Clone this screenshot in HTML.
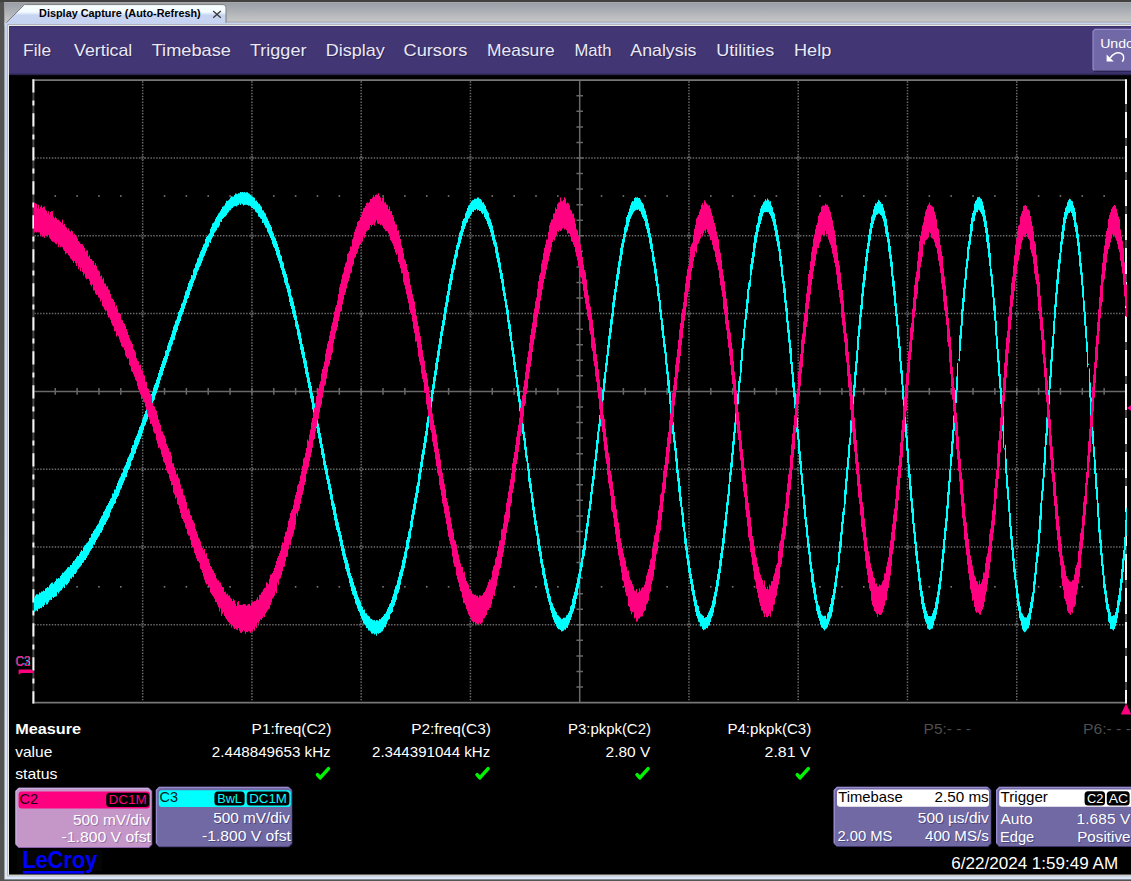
<!DOCTYPE html>
<html lang="en"><head><meta charset="utf-8"><title>Display Capture (Auto-Refresh)</title>
<style>
html,body{margin:0;padding:0;background:#525252;overflow:hidden}
svg{display:block;font-family:"Liberation Sans", Arial, Helvetica, sans-serif}
text{white-space:pre}
</style></head><body>
<svg width="1131" height="881" viewBox="0 0 1131 881">
<defs>
<linearGradient id="strip" x1="0" y1="0" x2="0" y2="1"><stop offset="0" stop-color="#979da6"/><stop offset="1" stop-color="#c9c9c9"/></linearGradient>
<linearGradient id="tab" x1="0" y1="0" x2="0" y2="1"><stop offset="0" stop-color="#f8ffff"/><stop offset="0.38" stop-color="#f2fbff"/><stop offset="0.55" stop-color="#c6d3f1"/><stop offset="1" stop-color="#c6d3f1"/></linearGradient>
<linearGradient id="frame" x1="0" y1="0" x2="0" y2="1"><stop offset="0" stop-color="#c6d3f1"/><stop offset="1" stop-color="#dce6fa"/></linearGradient>
<linearGradient id="tabcorner" x1="0" y1="0" x2="0" y2="1"><stop offset="0" stop-color="#9aa0a8"/><stop offset="1" stop-color="#c4c4c4"/></linearGradient>
</defs>

<rect x="0" y="0" width="1131" height="881" fill="#4f4f4f"/>
<rect x="0" y="0" width="1131" height="2" fill="#414141"/>
<rect x="4" y="2" width="1127" height="21" fill="url(#strip)"/>
<rect x="4" y="2" width="1127" height="1" fill="#a9a9a9"/>
<rect x="4" y="2" width="1" height="21" fill="#a0a0a0"/>
<rect x="226" y="21.6" width="905" height="1" fill="#9c9c9c"/>
<rect x="4.5" y="22.6" width="1131" height="857" fill="url(#frame)"/>
<rect x="4" y="22.6" width="0.8" height="857" fill="#a4a4a4"/>
<path d="M5,24 L24.5,4.6 L223,4.6 Q226,4.6 226,7.6 L226,24 Z" fill="url(#tab)" stroke="#7d7d7d" stroke-width="1"/>
<rect x="5" y="22.8" width="222" height="2" fill="#c6d3f1"/>
<rect x="4.6" y="22.8" width="3" height="3" fill="#c6d3f1"/>
<text x="39.1" y="16.9" font-size="10.6" fill="#000" font-weight="bold" textLength="161.6" lengthAdjust="spacingAndGlyphs">Display Capture (Auto-Refresh)</text>
<path d="M213.2,11 L220.8,17.8 M220.8,11 L213.2,17.8" stroke="#3c3c3c" stroke-width="1.4" fill="none"/>
<rect x="7.3" y="24.3" width="1131" height="852" fill="#a9a9a9"/>
<rect x="8.1" y="25.1" width="1131" height="850.4" fill="#f1f1ef"/>
<rect x="0" y="879.6" width="1131" height="2" fill="#555"/>
<rect x="0" y="0" width="4" height="881" fill="#525252"/>
<rect x="0" y="0" width="1131" height="2" fill="#414141"/>
<rect x="9" y="26" width="1131" height="848.6" fill="#000"/>
<rect x="9" y="26" width="1131" height="49" fill="#423774"/>
<rect x="9" y="73.6" width="1131" height="1.6" fill="#2c2452"/>
<rect x="9" y="26" width="1131" height="1" fill="#3a2f6a"/>
<text x="24.1" y="57.4" font-size="16.6" fill="#2d2557" font-weight="normal" textLength="28.0" lengthAdjust="spacingAndGlyphs">File</text>
<text x="23.1" y="56.4" font-size="16.6" fill="#ebe9f5" font-weight="normal" textLength="28.0" lengthAdjust="spacingAndGlyphs">File</text>
<text x="75.1" y="57.4" font-size="16.6" fill="#2d2557" font-weight="normal" textLength="58.2" lengthAdjust="spacingAndGlyphs">Vertical</text>
<text x="74.1" y="56.4" font-size="16.6" fill="#ebe9f5" font-weight="normal" textLength="58.2" lengthAdjust="spacingAndGlyphs">Vertical</text>
<text x="152.7" y="57.4" font-size="16.6" fill="#2d2557" font-weight="normal" textLength="79.2" lengthAdjust="spacingAndGlyphs">Timebase</text>
<text x="151.7" y="56.4" font-size="16.6" fill="#ebe9f5" font-weight="normal" textLength="79.2" lengthAdjust="spacingAndGlyphs">Timebase</text>
<text x="250.9" y="57.4" font-size="16.6" fill="#2d2557" font-weight="normal" textLength="56.6" lengthAdjust="spacingAndGlyphs">Trigger</text>
<text x="249.9" y="56.4" font-size="16.6" fill="#ebe9f5" font-weight="normal" textLength="56.6" lengthAdjust="spacingAndGlyphs">Trigger</text>
<text x="326.8" y="57.4" font-size="16.6" fill="#2d2557" font-weight="normal" textLength="58.9" lengthAdjust="spacingAndGlyphs">Display</text>
<text x="325.8" y="56.4" font-size="16.6" fill="#ebe9f5" font-weight="normal" textLength="58.9" lengthAdjust="spacingAndGlyphs">Display</text>
<text x="404.5" y="57.4" font-size="16.6" fill="#2d2557" font-weight="normal" textLength="63.8" lengthAdjust="spacingAndGlyphs">Cursors</text>
<text x="403.5" y="56.4" font-size="16.6" fill="#ebe9f5" font-weight="normal" textLength="63.8" lengthAdjust="spacingAndGlyphs">Cursors</text>
<text x="488.1" y="57.4" font-size="16.6" fill="#2d2557" font-weight="normal" textLength="67.6" lengthAdjust="spacingAndGlyphs">Measure</text>
<text x="487.1" y="56.4" font-size="16.6" fill="#ebe9f5" font-weight="normal" textLength="67.6" lengthAdjust="spacingAndGlyphs">Measure</text>
<text x="575.5" y="57.4" font-size="16.6" fill="#2d2557" font-weight="normal" textLength="37.0" lengthAdjust="spacingAndGlyphs">Math</text>
<text x="574.5" y="56.4" font-size="16.6" fill="#ebe9f5" font-weight="normal" textLength="37.0" lengthAdjust="spacingAndGlyphs">Math</text>
<text x="631.3" y="57.4" font-size="16.6" fill="#2d2557" font-weight="normal" textLength="66.2" lengthAdjust="spacingAndGlyphs">Analysis</text>
<text x="630.3" y="56.4" font-size="16.6" fill="#ebe9f5" font-weight="normal" textLength="66.2" lengthAdjust="spacingAndGlyphs">Analysis</text>
<text x="717.3" y="57.4" font-size="16.6" fill="#2d2557" font-weight="normal" textLength="57.9" lengthAdjust="spacingAndGlyphs">Utilities</text>
<text x="716.3" y="56.4" font-size="16.6" fill="#ebe9f5" font-weight="normal" textLength="57.9" lengthAdjust="spacingAndGlyphs">Utilities</text>
<text x="795.0" y="57.4" font-size="16.6" fill="#2d2557" font-weight="normal" textLength="37.3" lengthAdjust="spacingAndGlyphs">Help</text>
<text x="794.0" y="56.4" font-size="16.6" fill="#ebe9f5" font-weight="normal" textLength="37.3" lengthAdjust="spacingAndGlyphs">Help</text>
<path d="M1095,29.4 L1140,29.4 L1140,71 L1095,71 L1093,69 L1093,31.4 Z" fill="#7068a7" stroke="#958cca" stroke-width="1.2"/>
<path d="M1094,71.4 L1140,71.4" stroke="#2b2355" stroke-width="1.6"/>
<text x="1100.2" y="48.4" font-size="13.4" fill="#fff" font-weight="normal" textLength="33.7" lengthAdjust="spacingAndGlyphs">Undo</text>
<path d="M1106.6,54.6 L1106.6,61.6 L1113.8,61.6 Z" fill="#fff"/>
<path d="M1110.2,58 Q1114,52.6 1118.6,52.8 Q1124.6,53.6 1123.6,59 L1122.4,61.8" stroke="#fff" stroke-width="1.5" fill="none"/>
<path d="M142.66,81.20V701.60M251.92,81.20V701.60M361.18,81.20V701.60M470.44,81.20V701.60M688.96,81.20V701.60M798.22,81.20V701.60M907.48,81.20V701.60M1016.74,81.20V701.60M34.40,158.00H1125.00M34.40,235.80H1125.00M34.40,313.60H1125.00M34.40,469.20H1125.00M34.40,547.00H1125.00M34.40,624.80H1125.00" stroke="#6a6a6a" stroke-width="1.5" stroke-dasharray="1.45 1.45" fill="none"/>
<path d="M140.46,158.00L142.66,155.80L144.86,158.00L142.66,160.20ZM140.46,235.80L142.66,233.60L144.86,235.80L142.66,238.00ZM140.46,313.60L142.66,311.40L144.86,313.60L142.66,315.80ZM140.46,469.20L142.66,467.00L144.86,469.20L142.66,471.40ZM140.46,547.00L142.66,544.80L144.86,547.00L142.66,549.20ZM140.46,624.80L142.66,622.60L144.86,624.80L142.66,627.00ZM249.72,158.00L251.92,155.80L254.12,158.00L251.92,160.20ZM249.72,235.80L251.92,233.60L254.12,235.80L251.92,238.00ZM249.72,313.60L251.92,311.40L254.12,313.60L251.92,315.80ZM249.72,469.20L251.92,467.00L254.12,469.20L251.92,471.40ZM249.72,547.00L251.92,544.80L254.12,547.00L251.92,549.20ZM249.72,624.80L251.92,622.60L254.12,624.80L251.92,627.00ZM358.98,158.00L361.18,155.80L363.38,158.00L361.18,160.20ZM358.98,235.80L361.18,233.60L363.38,235.80L361.18,238.00ZM358.98,313.60L361.18,311.40L363.38,313.60L361.18,315.80ZM358.98,469.20L361.18,467.00L363.38,469.20L361.18,471.40ZM358.98,547.00L361.18,544.80L363.38,547.00L361.18,549.20ZM358.98,624.80L361.18,622.60L363.38,624.80L361.18,627.00ZM468.24,158.00L470.44,155.80L472.64,158.00L470.44,160.20ZM468.24,235.80L470.44,233.60L472.64,235.80L470.44,238.00ZM468.24,313.60L470.44,311.40L472.64,313.60L470.44,315.80ZM468.24,469.20L470.44,467.00L472.64,469.20L470.44,471.40ZM468.24,547.00L470.44,544.80L472.64,547.00L470.44,549.20ZM468.24,624.80L470.44,622.60L472.64,624.80L470.44,627.00ZM686.76,158.00L688.96,155.80L691.16,158.00L688.96,160.20ZM686.76,235.80L688.96,233.60L691.16,235.80L688.96,238.00ZM686.76,313.60L688.96,311.40L691.16,313.60L688.96,315.80ZM686.76,469.20L688.96,467.00L691.16,469.20L688.96,471.40ZM686.76,547.00L688.96,544.80L691.16,547.00L688.96,549.20ZM686.76,624.80L688.96,622.60L691.16,624.80L688.96,627.00ZM796.02,158.00L798.22,155.80L800.42,158.00L798.22,160.20ZM796.02,235.80L798.22,233.60L800.42,235.80L798.22,238.00ZM796.02,313.60L798.22,311.40L800.42,313.60L798.22,315.80ZM796.02,469.20L798.22,467.00L800.42,469.20L798.22,471.40ZM796.02,547.00L798.22,544.80L800.42,547.00L798.22,549.20ZM796.02,624.80L798.22,622.60L800.42,624.80L798.22,627.00ZM905.28,158.00L907.48,155.80L909.68,158.00L907.48,160.20ZM905.28,235.80L907.48,233.60L909.68,235.80L907.48,238.00ZM905.28,313.60L907.48,311.40L909.68,313.60L907.48,315.80ZM905.28,469.20L907.48,467.00L909.68,469.20L907.48,471.40ZM905.28,547.00L907.48,544.80L909.68,547.00L907.48,549.20ZM905.28,624.80L907.48,622.60L909.68,624.80L907.48,627.00ZM1014.54,158.00L1016.74,155.80L1018.94,158.00L1016.74,160.20ZM1014.54,235.80L1016.74,233.60L1018.94,235.80L1016.74,238.00ZM1014.54,313.60L1016.74,311.40L1018.94,313.60L1016.74,315.80ZM1014.54,469.20L1016.74,467.00L1018.94,469.20L1016.74,471.40ZM1014.54,547.00L1016.74,544.80L1018.94,547.00L1016.74,549.20ZM1014.54,624.80L1016.74,622.60L1018.94,624.80L1016.74,627.00Z" stroke="#5a5a5a" stroke-width="0.9" fill="none"/>
<g fill="#7a7a7a"><rect x="54.45" y="195.20" width="1.6" height="1.6"/><rect x="76.30" y="195.20" width="1.6" height="1.6"/><rect x="98.16" y="195.20" width="1.6" height="1.6"/><rect x="120.01" y="195.20" width="1.6" height="1.6"/><rect x="163.71" y="195.20" width="1.6" height="1.6"/><rect x="185.56" y="195.20" width="1.6" height="1.6"/><rect x="207.42" y="195.20" width="1.6" height="1.6"/><rect x="229.27" y="195.20" width="1.6" height="1.6"/><rect x="272.97" y="195.20" width="1.6" height="1.6"/><rect x="294.82" y="195.20" width="1.6" height="1.6"/><rect x="316.68" y="195.20" width="1.6" height="1.6"/><rect x="338.53" y="195.20" width="1.6" height="1.6"/><rect x="382.23" y="195.20" width="1.6" height="1.6"/><rect x="404.08" y="195.20" width="1.6" height="1.6"/><rect x="425.94" y="195.20" width="1.6" height="1.6"/><rect x="447.79" y="195.20" width="1.6" height="1.6"/><rect x="491.49" y="195.20" width="1.6" height="1.6"/><rect x="513.34" y="195.20" width="1.6" height="1.6"/><rect x="535.20" y="195.20" width="1.6" height="1.6"/><rect x="557.05" y="195.20" width="1.6" height="1.6"/><rect x="600.75" y="195.20" width="1.6" height="1.6"/><rect x="622.60" y="195.20" width="1.6" height="1.6"/><rect x="644.46" y="195.20" width="1.6" height="1.6"/><rect x="666.31" y="195.20" width="1.6" height="1.6"/><rect x="710.01" y="195.20" width="1.6" height="1.6"/><rect x="731.86" y="195.20" width="1.6" height="1.6"/><rect x="753.72" y="195.20" width="1.6" height="1.6"/><rect x="775.57" y="195.20" width="1.6" height="1.6"/><rect x="819.27" y="195.20" width="1.6" height="1.6"/><rect x="841.12" y="195.20" width="1.6" height="1.6"/><rect x="862.98" y="195.20" width="1.6" height="1.6"/><rect x="884.83" y="195.20" width="1.6" height="1.6"/><rect x="928.53" y="195.20" width="1.6" height="1.6"/><rect x="950.38" y="195.20" width="1.6" height="1.6"/><rect x="972.24" y="195.20" width="1.6" height="1.6"/><rect x="994.09" y="195.20" width="1.6" height="1.6"/><rect x="1037.79" y="195.20" width="1.6" height="1.6"/><rect x="1059.64" y="195.20" width="1.6" height="1.6"/><rect x="1081.50" y="195.20" width="1.6" height="1.6"/><rect x="1103.35" y="195.20" width="1.6" height="1.6"/><rect x="54.45" y="586.00" width="1.6" height="1.6"/><rect x="76.30" y="586.00" width="1.6" height="1.6"/><rect x="98.16" y="586.00" width="1.6" height="1.6"/><rect x="120.01" y="586.00" width="1.6" height="1.6"/><rect x="163.71" y="586.00" width="1.6" height="1.6"/><rect x="185.56" y="586.00" width="1.6" height="1.6"/><rect x="207.42" y="586.00" width="1.6" height="1.6"/><rect x="229.27" y="586.00" width="1.6" height="1.6"/><rect x="272.97" y="586.00" width="1.6" height="1.6"/><rect x="294.82" y="586.00" width="1.6" height="1.6"/><rect x="316.68" y="586.00" width="1.6" height="1.6"/><rect x="338.53" y="586.00" width="1.6" height="1.6"/><rect x="382.23" y="586.00" width="1.6" height="1.6"/><rect x="404.08" y="586.00" width="1.6" height="1.6"/><rect x="425.94" y="586.00" width="1.6" height="1.6"/><rect x="447.79" y="586.00" width="1.6" height="1.6"/><rect x="491.49" y="586.00" width="1.6" height="1.6"/><rect x="513.34" y="586.00" width="1.6" height="1.6"/><rect x="535.20" y="586.00" width="1.6" height="1.6"/><rect x="557.05" y="586.00" width="1.6" height="1.6"/><rect x="600.75" y="586.00" width="1.6" height="1.6"/><rect x="622.60" y="586.00" width="1.6" height="1.6"/><rect x="644.46" y="586.00" width="1.6" height="1.6"/><rect x="666.31" y="586.00" width="1.6" height="1.6"/><rect x="710.01" y="586.00" width="1.6" height="1.6"/><rect x="731.86" y="586.00" width="1.6" height="1.6"/><rect x="753.72" y="586.00" width="1.6" height="1.6"/><rect x="775.57" y="586.00" width="1.6" height="1.6"/><rect x="819.27" y="586.00" width="1.6" height="1.6"/><rect x="841.12" y="586.00" width="1.6" height="1.6"/><rect x="862.98" y="586.00" width="1.6" height="1.6"/><rect x="884.83" y="586.00" width="1.6" height="1.6"/><rect x="928.53" y="586.00" width="1.6" height="1.6"/><rect x="950.38" y="586.00" width="1.6" height="1.6"/><rect x="972.24" y="586.00" width="1.6" height="1.6"/><rect x="994.09" y="586.00" width="1.6" height="1.6"/><rect x="1037.79" y="586.00" width="1.6" height="1.6"/><rect x="1059.64" y="586.00" width="1.6" height="1.6"/><rect x="1081.50" y="586.00" width="1.6" height="1.6"/><rect x="1103.35" y="586.00" width="1.6" height="1.6"/></g>
<path d="M33.40,391.40H1126.00M579.70,80.20V702.60M55.25,388.10V394.70M77.10,388.10V394.70M98.96,388.10V394.70M120.81,388.10V394.70M142.66,388.10V394.70M164.51,388.10V394.70M186.36,388.10V394.70M208.22,388.10V394.70M230.07,388.10V394.70M251.92,388.10V394.70M273.77,388.10V394.70M295.62,388.10V394.70M317.48,388.10V394.70M339.33,388.10V394.70M361.18,388.10V394.70M383.03,388.10V394.70M404.88,388.10V394.70M426.74,388.10V394.70M448.59,388.10V394.70M470.44,388.10V394.70M492.29,388.10V394.70M514.14,388.10V394.70M536.00,388.10V394.70M557.85,388.10V394.70M579.70,388.10V394.70M601.55,388.10V394.70M623.40,388.10V394.70M645.26,388.10V394.70M667.11,388.10V394.70M688.96,388.10V394.70M710.81,388.10V394.70M732.66,388.10V394.70M754.52,388.10V394.70M776.37,388.10V394.70M798.22,388.10V394.70M820.07,388.10V394.70M841.92,388.10V394.70M863.78,388.10V394.70M885.63,388.10V394.70M907.48,388.10V394.70M929.33,388.10V394.70M951.18,388.10V394.70M973.04,388.10V394.70M994.89,388.10V394.70M1016.74,388.10V394.70M1038.59,388.10V394.70M1060.44,388.10V394.70M1082.30,388.10V394.70M1104.15,388.10V394.70M576.40,95.76H583.00M576.40,111.32H583.00M576.40,126.88H583.00M576.40,142.44H583.00M576.40,158.00H583.00M576.40,173.56H583.00M576.40,189.12H583.00M576.40,204.68H583.00M576.40,220.24H583.00M576.40,235.80H583.00M576.40,251.36H583.00M576.40,266.92H583.00M576.40,282.48H583.00M576.40,298.04H583.00M576.40,313.60H583.00M576.40,329.16H583.00M576.40,344.72H583.00M576.40,360.28H583.00M576.40,375.84H583.00M576.40,391.40H583.00M576.40,406.96H583.00M576.40,422.52H583.00M576.40,438.08H583.00M576.40,453.64H583.00M576.40,469.20H583.00M576.40,484.76H583.00M576.40,500.32H583.00M576.40,515.88H583.00M576.40,531.44H583.00M576.40,547.00H583.00M576.40,562.56H583.00M576.40,578.12H583.00M576.40,593.68H583.00M576.40,609.24H583.00M576.40,624.80H583.00M576.40,640.36H583.00M576.40,655.92H583.00M576.40,671.48H583.00M576.40,687.04H583.00" stroke="#686868" stroke-width="1.5" fill="none"/>
<path d="M32.40,80.20H1127.00M32.40,702.60H1127.00" stroke="#767676" stroke-width="1.8" fill="none"/>
<path d="M33.40,79.20V703.60M1126.00,79.20V703.60" stroke="#484848" stroke-width="2" fill="none"/>
<path d="M33.40,79.20V703.60" stroke="#f4f4f4" stroke-width="2" stroke-dasharray="13.4 8 4.8 7.8" fill="none"/>
<path d="M1126.00,79.20V703.60" stroke="#f4f4f4" stroke-width="2" stroke-dasharray="26 8" stroke-dashoffset="1.2" fill="none"/>
<path d="M34,612.0L34,597.5H35L35,595.5H36L36,594.2H37L37,594.2H38L38,594.5H39L39,592.5H40L40,592.7H41L41,591.5H42L42,591.5H43L43,590.5H44L44,591.0H45L45,588.5H46L46,588.0H47L47,587.0H48L48,587.5H49L49,585.2H50L50,583.7H51L51,582.7H52L52,582.5H53L53,584.0H54L54,582.2H55L55,581.0H56L56,578.5H57L57,579.0H58L58,578.0H59L59,578.5H60L60,576.0H61L61,574.7H62L62,572.7H63L63,572.7H64L64,571.5H65L65,570.5H66L66,569.2H67L67,567.5H68L68,567.0H69L69,567.2H70L70,565.0H71L71,565.0H72L72,562.7H73L73,561.0H74L74,560.5H75L75,559.0H76L76,557.2H77L77,555.7H78L78,556.0H79L79,553.7H80L80,551.7H81L81,550.0H82L82,551.0H83L83,547.2H84L84,545.5H85L85,544.7H86L86,543.2H87L87,542.5H88L88,541.2H89L89,538.0H90L90,537.5H91L91,534.0H92L92,533.2H93L93,531.0H94L94,529.5H95L95,528.5H96L96,526.2H97L97,524.7H98L98,523.5H99L99,520.5H100L100,518.5H101L101,516.2H102L102,515.2H103L103,511.9H104L104,510.7H105L105,508.7H106L106,506.2H107L107,504.9H108L108,502.9H109L109,500.9H110L110,498.7H111L111,497.7H112L112,493.4H113L113,493.4H114L114,489.4H115L115,489.4H116L116,485.9H117L117,482.9H118L118,480.4H119L119,478.2H120L120,476.4H121L121,473.4H122L122,472.4H123L123,468.4H124L124,466.4H125L125,464.7H126L126,461.9H127L127,458.4H128L128,456.7H129L129,454.4H130L130,452.7H131L131,447.9H132L132,445.2H133L133,444.7H134L134,440.2H135L135,437.7H136L136,435.7H137L137,433.4H138L138,430.2H139L139,426.9H140L140,425.4H141L141,422.7H142L142,419.2H143L143,416.4H144L144,413.9H145L145,410.9H146L146,407.4H147L147,405.7H148L148,402.4H149L149,399.4H150L150,397.4H151L151,393.9H152L152,391.7H153L153,387.4H154L154,384.7H155L155,382.9H156L156,379.4H157L157,376.9H158L158,372.9H159L159,369.9H160L160,366.9H161L161,363.9H162L162,360.7H163L163,357.9H164L164,355.9H165L165,350.7H166L166,349.9H167L167,345.4H168L168,342.4H169L169,339.9H170L170,337.2H171L171,334.2H172L172,330.4H173L173,326.4H174L174,324.4H175L175,320.7H176L176,319.4H177L177,316.2H178L178,311.9H179L179,310.2H180L180,307.9H181L181,303.7H182L182,302.4H183L183,299.4H184L184,295.4H185L185,291.4H186L186,290.2H187L187,286.7H188L188,282.9H189L189,280.7H190L190,279.2H191L191,274.9H192L192,275.2H193L193,269.4H194L194,267.9H195L195,264.2H196L196,262.4H197L197,258.4H198L198,257.4H199L199,254.2H200L200,251.4H201L201,249.7H202L202,247.2H203L203,244.4H204L204,243.4H205L205,238.9H206L206,236.9H207L207,235.7H208L208,234.4H209L209,233.2H210L210,228.7H211L211,226.7H212L212,223.4H213L213,222.7H214L214,221.4H215L215,218.7H216L216,216.9H217L217,215.4H218L218,213.4H219L219,212.4H220L220,210.7H221L221,208.9H222L222,206.7H223L223,206.2H224L224,205.4H225L225,203.2H226L226,200.7H227L227,200.9H228L228,200.2H229L229,199.2H230L230,197.4H231L231,196.2H232L232,196.4H233L233,196.7H234L234,194.9H235L235,193.4H236L236,193.7H237L237,194.2H238L238,193.2H239L239,193.2H240L240,191.9H241L241,192.2H242L242,191.9H243L243,192.4H244L244,191.9H245L245,192.7H246L246,192.2H247L247,192.2H248L248,193.2H249L249,193.7H250L250,194.7H251L251,195.7H252L252,196.4H253L253,197.2H254L254,197.7H255L255,200.7H256L256,200.4H257L257,201.9H258L258,203.4H259L259,203.7H260L260,205.4H261L261,206.7H262L262,210.2H263L263,210.4H264L264,212.4H265L265,213.4H266L266,216.7H267L267,218.4H268L268,220.7H269L269,223.2H270L270,224.9H271L271,226.9H272L272,231.2H273L273,233.2H274L274,236.4H275L275,238.2H276L276,240.9H277L277,243.7H278L278,246.9H279L279,249.9H280L280,254.4H281L281,255.9H282L282,261.2H283L283,262.7H284L284,268.4H285L285,271.2H286L286,273.9H287L287,277.4H288L288,283.2H289L289,285.4H290L290,288.9H291L291,295.4H292L292,297.4H293L293,301.4H294L294,305.7H295L295,310.2H296L296,315.4H297L297,320.9H298L298,324.4H299L299,329.2H300L300,332.4H301L301,338.2H302L302,343.9H303L303,346.7H304L304,351.7H305L305,357.9H306L306,360.4H307L307,366.7H308L308,372.2H309L309,377.4H310L310,381.9H311L311,385.9H312L312,392.4H313L313,395.9H314L314,403.2H315L315,406.9H316L316,415.2H317L317,418.2H318L318,423.4H319L319,427.4H320L320,432.9H321L321,437.4H322L322,443.9H323L323,448.4H324L324,453.4H325L325,460.7H326L326,464.9H327L327,468.4H328L328,475.4H329L329,478.9H330L330,483.7H331L331,488.2H332L332,494.2H333L333,500.7H334L334,503.4H335L335,506.9H336L336,513.5H337L337,518.7H338L338,522.2H339L339,527.2H340L340,531.2H341L341,535.0H342L342,539.7H343L343,545.0H344L344,548.5H345L345,553.5H346L346,557.2H347L347,560.0H348L348,563.5H349L349,568.0H350L350,573.0H351L351,576.0H352L352,578.2H353L353,582.0H354L354,585.5H355L355,587.5H356L356,591.0H357L357,594.5H358L358,597.2H359L359,599.5H360L360,601.5H361L361,605.5H362L362,606.7H363L363,610.0H364L364,609.5H365L365,613.2H366L366,613.2H367L367,615.2H368L368,615.7H369L369,616.5H370L370,618.5H371L371,619.0H372L372,619.7H373L373,620.2H374L374,620.0H375L375,621.2H376L376,620.0H377L377,620.2H378L378,620.7H379L379,619.0H380L380,619.2H381L381,617.7H382L382,617.0H383L383,615.7H384L384,614.0H385L385,613.5H386L386,611.5H387L387,608.7H388L388,607.0H389L389,604.2H390L390,603.0H391L391,600.0H392L392,596.5H393L393,593.7H394L394,589.5H395L395,586.2H396L396,584.7H397L397,580.2H398L398,576.7H399L399,572.0H400L400,569.5H401L401,565.5H402L402,559.7H403L403,556.5H404L404,551.5H405L405,547.2H406L406,540.0H407L407,537.0H408L408,531.2H409L409,528.5H410L410,520.7H411L411,514.5H412L412,509.4H413L413,503.7H414L414,497.7H415L415,492.7H416L416,485.7H417L417,482.2H418L418,473.4H419L419,468.2H420L420,461.7H421L421,454.2H422L422,449.4H423L423,442.9H424L424,436.2H425L425,430.9H426L426,422.4H427L427,416.7H428L428,409.4H429L429,403.4H430L430,397.2H431L431,389.9H432L432,384.2H433L433,376.7H434L434,370.4H435L435,362.7H436L436,357.7H437L437,350.4H438L438,344.4H439L439,338.2H440L440,331.4H441L441,325.9H442L442,320.2H443L443,314.2H444L444,307.2H445L445,302.2H446L446,295.4H447L447,290.9H448L448,283.7H449L449,278.4H450L450,273.9H451L451,268.2H452L452,264.4H453L453,258.7H454L454,254.4H455L455,249.9H456L456,244.9H457L457,242.4H458L458,237.2H459L459,232.4H460L460,230.4H461L461,225.9H462L462,220.9H463L463,218.9H464L464,217.9H465L465,213.2H466L466,211.2H467L467,207.9H468L468,205.4H469L469,204.7H470L470,202.7H471L471,201.2H472L472,200.2H473L473,199.9H474L474,198.7H475L475,198.7H476L476,198.7H477L477,197.4H478L478,197.4H479L479,198.7H480L480,198.9H481L481,200.2H482L482,202.4H483L483,202.2H484L484,204.4H485L485,205.9H486L486,209.2H487L487,211.2H488L488,212.7H489L489,217.4H490L490,219.2H491L491,222.4H492L492,225.4H493L493,230.2H494L494,234.7H495L495,239.4H496L496,242.2H497L497,246.4H498L498,252.4H499L499,257.4H500L500,262.4H501L501,269.7H502L502,272.9H503L503,278.9H504L504,286.7H505L505,292.7H506L506,299.2H507L507,304.9H508L508,309.7H509L509,319.9H510L510,324.2H511L511,331.9H512L512,340.9H513L513,347.2H514L514,354.2H515L515,361.9H516L516,369.9H517L517,376.9H518L518,384.7H519L519,391.2H520L520,399.2H521L521,407.4H522L522,413.9H523L523,423.9H524L524,431.7H525L525,437.9H526L526,446.7H527L527,455.4H528L528,462.9H529L529,468.9H530L530,477.9H531L531,483.4H532L532,491.9H533L533,498.2H534L534,506.7H535L535,514.0H536L536,520.5H537L537,526.0H538L538,533.5H539L539,538.7H540L540,545.7H541L541,551.5H542L542,559.0H543L543,564.5H544L544,567.7H545L545,574.2H546L546,579.0H547L547,583.2H548L548,588.2H549L549,593.7H550L550,596.2H551L551,601.7H552L552,603.2H553L553,606.5H554L554,608.2H555L555,610.7H556L556,612.2H557L557,615.0H558L558,615.5H559L559,616.7H560L560,617.7H561L561,619.2H562L562,618.7H563L563,617.7H564L564,617.7H565L565,617.5H566L566,615.2H567L567,614.7H568L568,612.7H569L569,610.7H570L570,606.2H571L571,604.7H572L572,598.7H573L573,595.5H574L574,591.7H575L575,587.5H576L576,583.2H577L577,578.5H578L578,573.5H579L579,569.0H580L580,562.7H581L581,557.7H582L582,549.5H583L583,545.0H584L584,538.2H585L585,529.2H586L586,523.0H587L587,515.0H588L588,508.7H589L589,500.7H590L590,491.9H591L591,483.4H592L592,475.9H593L593,466.4H594L594,459.2H595L595,449.4H596L596,439.9H597L597,431.4H598L598,423.7H599L599,414.9H600L600,405.2H601L601,395.7H602L602,389.4H603L603,378.4H604L604,371.9H605L605,362.7H606L606,354.7H607L607,344.9H608L608,335.7H609L609,327.9H610L610,319.2H611L611,313.2H612L612,302.2H613L613,295.2H614L614,288.9H615L615,280.7H616L616,274.2H617L617,267.4H618L618,261.2H619L619,255.4H620L620,247.7H621L621,243.2H622L622,238.9H623L623,233.9H624L624,227.2H625L625,224.7H626L626,216.9H627L627,214.9H628L628,211.9H629L629,208.4H630L630,205.2H631L631,202.4H632L632,200.9H633L633,201.2H634L634,197.9H635L635,197.2H636L636,197.4H637L637,197.2H638L638,197.9H639L639,197.9H640L640,199.4H641L641,201.7H642L642,202.9H643L643,204.4H644L644,208.4H645L645,210.7H646L646,214.7H647L647,218.7H648L648,223.2H649L649,227.9H650L650,233.2H651L651,237.4H652L652,243.4H653L653,250.9H654L654,256.7H655L655,262.7H656L656,268.7H657L657,276.2H658L658,283.7H659L659,292.9H660L660,299.9H661L661,309.4H662L662,318.2H663L663,324.9H664L664,335.7H665L665,343.9H666L666,352.2H667L667,363.4H668L668,371.4H669L669,379.9H670L670,391.9H671L671,400.7H672L672,411.9H673L673,422.2H674L674,431.9H675L675,440.4H676L676,447.9H677L677,458.2H678L678,469.9H679L679,477.9H680L680,485.9H681L681,496.7H682L682,506.9H683L683,512.5H684L684,522.2H685L685,531.7H686L686,538.2H687L687,546.7H688L688,554.7H689L689,560.7H690L690,568.0H691L691,573.7H692L692,579.0H693L693,584.5H694L694,590.0H695L695,596.2H696L696,599.7H697L697,605.0H698L698,606.0H699L699,611.0H700L700,613.5H701L701,614.2H702L702,615.2H703L703,616.0H704L704,618.0H705L705,617.2H706L706,617.0H707L707,615.0H708L708,612.5H709L709,610.5H710L710,608.0H711L711,605.5H712L712,600.5H713L713,596.2H714L714,591.7H715L715,586.7H716L716,580.0H717L717,573.7H718L718,568.7H719L719,560.2H720L720,553.0H721L721,546.2H722L722,538.0H723L723,528.5H724L724,520.2H725L725,511.7H726L726,502.2H727L727,494.2H728L728,484.2H729L729,472.2H730L730,462.4H731L731,452.7H732L732,441.2H733L733,431.7H734L734,422.4H735L735,409.4H736L736,399.7H737L737,393.4H738L738,380.9H739L739,376.2H740L740,359.9H741L741,348.2H742L742,337.9H743L743,328.7H744L744,319.2H745L745,308.9H746L746,299.2H747L747,288.9H748L748,282.4H749L749,279.9H750L750,264.2H751L751,257.9H752L752,251.9H753L753,242.7H754L754,235.4H755L755,231.9H756L756,224.9H757L757,222.7H758L758,216.2H759L759,212.9H760L760,208.4H761L761,205.9H762L762,204.4H763L763,202.2H764L764,201.2H765L765,199.2H766L766,200.4H767L767,198.4H768L768,199.7H769L769,201.4H770L770,201.2H771L771,205.4H772L772,207.2H773L773,211.9H774L774,213.4H775L775,218.9H776L776,224.7H777L777,229.7H778L778,234.9H779L779,241.2H780L780,248.9H781L781,255.9H782L782,264.4H783L783,275.2H784L784,280.9H785L785,288.2H786L786,300.2H787L787,307.9H788L788,320.7H789L789,329.7H790L790,339.7H791L791,347.9H792L792,361.9H793L793,372.2H794L794,382.2H795L795,392.7H796L796,407.9H797L797,417.4H798L798,428.9H799L799,439.2H800L800,451.2H801L801,460.9H802L802,473.2H803L803,483.7H804L804,494.4H805L805,504.9H806L806,517.0H807L807,524.7H808L808,535.5H809L809,543.5H810L810,551.7H811L811,561.7H812L812,568.7H813L813,573.7H814L814,582.2H815L815,587.5H816L816,594.5H817L817,601.0H818L818,604.7H819L819,606.2H820L820,610.7H821L821,614.2H822L822,615.5H823L823,616.2H824L824,615.7H825L825,615.7H826L826,618.7H827L827,613.5H828L828,612.0H829L829,607.0H830L830,604.0H831L831,598.0H832L832,595.0H833L833,589.0H834L834,582.2H835L835,575.5H836L836,567.2H837L837,565.0H838L838,551.7H839L839,541.2H840L840,532.2H841L841,521.7H842L842,511.7H843L843,507.7H844L844,489.7H845L845,478.4H846L846,467.2H847L847,457.2H848L848,444.4H849L849,437.4H850L850,420.2H851L851,406.9H852L852,395.7H853L853,384.7H854L854,371.7H855L855,361.2H856L856,350.4H857L857,335.9H858L858,325.4H859L859,314.4H860L860,304.9H861L861,293.4H862L862,282.4H863L863,273.9H864L864,265.9H865L865,256.9H866L866,248.9H867L867,242.7H868L868,234.7H869L869,228.7H870L870,222.9H871L871,216.4H872L872,214.4H873L873,209.2H874L874,205.9H875L875,203.2H876L876,203.4H877L877,201.9H878L878,199.7H879L879,200.7H880L880,201.9H881L881,203.7H882L882,203.9H883L883,207.4H884L884,210.7H885L885,215.7H886L886,218.7H887L887,225.4H888L888,232.2H889L889,238.9H890L890,245.9H891L891,254.4H892L892,261.7H893L893,275.4H894L894,280.7H895L895,290.9H896L896,303.2H897L897,313.7H898L898,324.7H899L899,336.4H900L900,346.2H901L901,360.9H902L902,370.2H903L903,385.4H904L904,397.7H905L905,412.2H906L906,423.7H907L907,436.2H908L908,448.4H909L909,464.2H910L910,473.9H911L911,485.9H912L912,498.2H913L913,508.2H914L914,523.0H915L915,531.7H916L916,541.7H917L917,551.0H918L918,560.7H919L919,569.0H920L920,577.7H921L921,585.2H922L922,591.0H923L923,596.2H924L924,603.0H925L925,606.7H926L926,610.7H927L927,613.7H928L928,616.0H929L929,616.0H930L930,616.2H931L931,616.0H932L932,613.2H933L933,610.2H934L934,608.0H935L935,601.7H936L936,597.2H937L937,591.5H938L938,584.2H939L939,577.5H940L940,570.7H941L941,558.7H942L942,549.2H943L943,539.0H944L944,527.7H945L945,518.2H946L946,505.4H947L947,491.9H948L948,480.7H949L949,469.4H950L950,453.9H951L951,441.2H952L952,429.7H953L953,415.4H954L954,402.2H955L955,389.9H956L956,376.4H957L957,362.9H958L958,359.3H959L959,335.2H960L960,325.4H961L961,309.2H962L962,297.9H963L963,287.4H964L964,278.4H965L965,267.2H966L966,258.7H967L967,246.7H968L968,240.9H969L969,233.9H970L970,223.9H971L971,217.4H972L972,212.9H973L973,210.4H974L974,203.4H975L975,200.9H976L976,199.7H977L977,197.2H978L978,197.2H979L979,196.7H980L980,198.2H981L981,198.9H982L982,201.4H983L983,205.4H984L984,209.7H985L985,215.4H986L986,220.7H987L987,227.9H988L988,234.4H989L989,242.7H990L990,252.9H991L991,268.7H992L992,274.2H993L993,284.4H994L994,297.7H995L995,305.4H996L996,320.7H997L997,336.2H998L998,348.9H999L999,360.4H1000L1000,373.9H1001L1001,387.7H1002L1002,404.4H1003L1003,415.9H1004L1004,448.3H1005L1005,444.7H1006L1006,458.7H1007L1007,474.9H1008L1008,486.7H1009L1009,499.9H1010L1010,513.0H1011L1011,526.0H1012L1012,536.0H1013L1013,547.5H1014L1014,558.5H1015L1015,568.7H1016L1016,579.5H1017L1017,585.2H1018L1018,593.5H1019L1019,601.5H1020L1020,606.2H1021L1021,612.5H1022L1022,613.7H1023L1023,615.7H1024L1024,617.2H1025L1025,617.2H1026L1026,617.5H1027L1027,615.2H1028L1028,613.2H1029L1029,607.7H1030L1030,602.0H1031L1031,596.5H1032L1032,592.2H1033L1033,581.2H1034L1034,572.7H1035L1035,562.2H1036L1036,552.2H1037L1037,543.7H1038L1038,529.5H1039L1039,515.5H1040L1040,502.7H1041L1041,490.4H1042L1042,478.4H1043L1043,462.7H1044L1044,446.7H1045L1045,433.2H1046L1046,417.2H1047L1047,402.7H1048L1048,389.9H1049L1049,375.7H1050L1050,359.4H1051L1051,346.7H1052L1052,335.9H1053L1053,320.7H1054L1054,304.4H1055L1055,292.4H1056L1056,279.4H1057L1057,268.7H1058L1058,259.4H1059L1059,252.9H1060L1060,241.4H1061L1061,231.7H1062L1062,224.7H1063L1063,217.2H1064L1064,211.9H1065L1065,207.7H1066L1066,206.2H1067L1067,202.2H1068L1068,200.2H1069L1069,198.7H1070L1070,199.2H1071L1071,200.7H1072L1072,201.2H1073L1073,205.2H1074L1074,207.7H1075L1075,211.9H1076L1076,222.4H1077L1077,225.2H1078L1078,233.7H1079L1079,242.2H1080L1080,251.7H1081L1081,262.9H1082L1082,272.4H1083L1083,285.7H1084L1084,300.4H1085L1085,311.7H1086L1086,325.9H1087L1087,341.7H1088L1088,363.8H1089L1089,368.4H1090L1090,382.4H1091L1091,397.4H1092L1092,414.9H1093L1093,430.7H1094L1094,446.4H1095L1095,459.4H1096L1096,472.9H1097L1097,486.9H1098L1098,502.9H1099L1099,517.5H1100L1100,529.5H1101L1101,539.7H1102L1102,553.2H1103L1103,564.5H1104L1104,575.5H1105L1105,584.0H1106L1106,590.5H1107L1107,597.7H1108L1108,604.0H1109L1109,608.7H1110L1110,612.2H1111L1111,616.2H1112L1112,616.0H1113L1113,615.2H1114L1114,615.2H1115L1115,612.0H1116L1116,608.0H1117L1117,600.2H1118L1118,595.0H1119L1119,587.7H1120L1120,578.7H1121L1121,569.0H1122L1122,558.5H1123L1123,550.0H1124L1124,537.0H1125L1125,520.5H1126L1126,508.2H1127L1127,535.7H1126L1126,550.0H1125L1125,560.5H1124L1124,572.0H1123L1123,582.7H1122L1122,590.7H1121L1121,601.7H1120L1120,605.5H1119L1119,612.7H1118L1118,618.2H1117L1117,623.0H1116L1116,626.2H1115L1115,629.0H1114L1114,630.5H1113L1113,629.5H1112L1112,629.0H1111L1111,629.0H1110L1110,623.2H1109L1109,621.7H1108L1108,612.2H1107L1107,609.5H1106L1106,602.5H1105L1105,594.2H1104L1104,588.2H1103L1103,575.2H1102L1102,566.0H1101L1101,555.2H1100L1100,543.2H1099L1099,532.5H1098L1098,517.0H1097L1097,499.7H1096L1096,488.9H1095L1095,473.9H1094L1094,456.9H1093L1093,443.9H1092L1092,428.7H1091L1091,416.2H1090L1090,397.4H1089L1089,365.1H1088L1088,367.2H1087L1087,351.9H1086L1086,338.2H1085L1085,325.4H1084L1084,311.7H1083L1083,297.4H1082L1082,285.2H1081L1081,274.7H1080L1080,266.4H1079L1079,255.2H1078L1078,245.9H1077L1077,238.2H1076L1076,231.7H1075L1075,226.9H1074L1074,219.9H1073L1073,216.4H1072L1072,212.9H1071L1071,211.4H1070L1070,212.9H1069L1069,213.2H1068L1068,215.4H1067L1067,218.9H1066L1066,223.2H1065L1065,230.7H1064L1064,238.9H1063L1063,244.4H1062L1062,252.4H1061L1061,263.4H1060L1060,272.2H1059L1059,283.9H1058L1058,294.2H1057L1057,306.9H1056L1056,318.2H1055L1055,333.9H1054L1054,348.7H1053L1053,361.4H1052L1052,377.2H1051L1051,388.7H1050L1050,404.4H1049L1049,418.9H1048L1048,435.7H1047L1047,444.9H1046L1046,464.7H1045L1045,477.4H1044L1044,491.2H1043L1043,500.4H1042L1042,519.7H1041L1041,533.0H1040L1040,543.7H1039L1039,556.5H1038L1038,563.0H1037L1037,574.5H1036L1036,584.5H1035L1035,593.2H1034L1034,601.7H1033L1033,608.2H1032L1032,613.0H1031L1031,619.5H1030L1030,625.0H1029L1029,628.2H1028L1028,628.7H1027L1027,630.5H1026L1026,631.7H1025L1025,632.2H1024L1024,631.2H1023L1023,629.5H1022L1022,625.5H1021L1021,620.7H1020L1020,618.2H1019L1019,610.7H1018L1018,606.0H1017L1017,598.0H1016L1016,588.2H1015L1015,579.7H1014L1014,572.2H1013L1013,561.0H1012L1012,550.0H1011L1011,539.2H1010L1010,527.0H1009L1009,511.7H1008L1008,499.4H1007L1007,488.4H1006L1006,473.4H1005L1005,449.6H1004L1004,447.7H1003L1003,431.2H1002L1002,418.9H1001L1001,403.9H1000L1000,388.4H999L999,376.2H998L998,362.4H997L997,348.9H996L996,335.4H995L995,320.7H994L994,310.7H993L993,297.2H992L992,286.7H991L991,276.2H990L990,265.9H989L989,257.4H988L988,248.4H987L987,241.9H986L986,232.9H985L985,226.9H984L984,221.4H983L983,216.4H982L982,213.9H981L981,212.2H980L980,210.4H979L979,209.7H978L978,212.2H977L977,212.2H976L976,215.4H975L975,220.9H974L974,221.7H973L973,231.2H972L972,236.4H971L971,244.7H970L970,249.2H969L969,260.7H968L968,268.4H967L967,279.7H966L966,288.7H965L965,301.9H964L964,311.2H963L963,325.7H962L962,338.7H961L961,350.9H960L960,361.2H959L959,360.6H958L958,390.4H957L957,402.9H956L956,416.2H955L955,430.9H954L954,443.4H953L953,456.7H952L952,465.9H951L951,482.2H950L950,494.7H949L949,508.4H948L948,521.2H947L947,531.0H946L946,540.0H945L945,553.2H944L944,562.7H943L943,571.0H942L942,581.2H941L941,589.5H940L940,595.2H939L939,603.7H938L938,609.2H937L937,614.7H936L936,618.7H935L935,620.7H934L934,625.2H933L933,628.5H932L932,628.7H931L931,629.5H930L930,630.0H929L929,629.2H928L928,628.5H927L927,623.7H926L926,621.7H925L925,618.7H924L924,613.2H923L923,609.2H922L922,604.2H921L921,596.5H920L920,590.0H919L919,581.2H918L918,572.2H917L917,563.7H916L916,555.7H915L915,544.0H914L914,533.5H913L913,524.0H912L912,512.7H911L911,501.2H910L910,489.7H909L909,477.7H908L908,462.9H907L907,450.7H906L906,437.7H905L905,424.7H904L904,412.2H903L903,399.4H902L902,384.4H901L901,373.4H900L900,361.4H899L899,347.9H898L898,338.7H897L897,326.2H896L896,315.9H895L895,305.9H894L894,295.4H893L893,286.4H892L892,276.4H891L891,266.7H890L890,258.7H889L889,251.7H888L888,242.4H887L887,236.9H886L886,233.7H885L885,226.4H884L884,221.4H883L883,218.4H882L882,215.7H881L881,214.9H880L880,213.7H879L879,213.4H878L878,214.4H877L877,214.9H876L876,217.4H875L875,220.4H874L874,223.9H873L873,227.9H872L872,233.7H871L871,240.4H870L870,246.2H869L869,252.9H868L868,261.2H867L867,270.9H866L866,280.2H865L865,287.2H864L864,296.2H863L863,309.2H862L862,317.2H861L861,329.2H860L860,336.9H859L859,349.9H858L858,363.2H857L857,375.2H856L856,387.7H855L855,396.4H854L854,406.7H853L853,423.2H852L852,432.9H851L851,444.9H850L850,457.9H849L849,469.4H848L848,481.2H847L847,494.4H846L846,504.2H845L845,515.0H844L844,523.7H843L843,534.5H842L842,547.2H841L841,553.2H840L840,563.0H839L839,571.2H838L838,578.2H837L837,586.7H836L836,593.2H835L835,599.5H834L834,605.2H833L833,612.2H832L832,616.5H831L831,618.5H830L830,621.5H829L829,624.5H828L828,627.2H827L827,628.5H826L826,629.2H825L825,630.5H824L824,629.2H823L823,628.0H822L822,627.5H821L821,624.7H820L820,620.7H819L819,618.0H818L818,614.5H817L817,611.0H816L816,603.2H815L815,599.7H814L814,593.5H813L813,587.7H812L812,582.5H811L811,572.2H810L810,564.5H809L809,554.5H808L808,547.5H807L807,537.5H806L806,527.2H805L805,519.2H804L804,509.2H803L803,496.4H802L802,484.9H801L801,474.7H800L800,464.2H799L799,453.9H798L798,439.7H797L797,432.2H796L796,418.9H795L795,408.2H794L794,397.2H793L793,387.4H792L792,374.2H791L791,363.9H790L790,353.4H789L789,342.4H788L788,332.7H787L787,322.4H786L786,311.4H785L785,302.7H784L784,292.9H783L783,283.4H782L782,276.7H781L781,266.7H780L780,260.9H779L779,251.2H778L778,246.4H777L777,241.2H776L776,236.4H775L775,230.4H774L774,225.7H773L773,221.4H772L772,218.4H771L771,215.7H770L770,213.9H769L769,212.2H768L768,212.2H767L767,211.9H766L766,212.2H765L765,212.2H764L764,213.2H763L763,216.4H762L762,220.4H761L761,223.9H760L760,227.4H759L759,231.7H758L758,237.2H757L757,242.7H756L756,248.2H755L755,256.7H754L754,263.2H753L753,269.4H752L752,275.2H751L751,286.7H750L750,289.7H749L749,303.2H748L748,312.9H747L747,319.7H746L746,327.7H745L745,340.4H744L744,348.7H743L743,360.9H742L742,372.7H741L741,382.7H740L740,391.9H739L739,404.2H738L738,412.2H737L737,421.4H736L736,432.9H735L735,444.7H734L734,454.7H733L733,467.2H732L732,475.2H731L731,481.9H730L730,495.7H729L729,505.2H728L728,514.2H727L727,526.2H726L726,533.5H725L725,543.5H724L724,550.2H723L723,558.2H722L722,566.2H721L721,573.0H720L720,579.5H719L719,586.2H718L718,591.5H717L717,596.5H716L716,604.2H715L715,607.2H714L714,612.7H713L713,616.2H712L712,618.2H711L711,622.0H710L710,625.5H709L709,625.7H708L708,628.2H707L707,628.0H706L706,629.2H705L705,629.5H704L704,630.2H703L703,629.0H702L702,626.2H701L701,626.5H700L700,622.5H699L699,621.7H698L698,618.5H697L697,616.0H696L696,612.0H695L695,606.2H694L694,601.5H693L693,595.2H692L692,591.2H691L691,584.0H690L690,578.2H689L689,572.7H688L688,565.2H687L687,558.5H686L686,550.5H685L685,543.7H684L684,531.5H683L683,527.0H682L682,515.2H681L681,506.7H680L680,500.9H679L679,492.2H678L678,481.4H677L677,472.9H676L676,461.4H675L675,450.7H674L674,442.4H673L673,434.2H672L672,423.2H671L671,415.2H670L670,403.9H669L669,392.9H668L668,385.7H667L667,374.2H666L666,364.7H665L665,353.4H664L664,347.2H663L663,337.9H662L662,330.4H661L661,319.7H660L660,312.2H659L659,301.2H658L658,296.2H657L657,286.2H656L656,280.9H655L655,273.4H654L654,265.7H653L653,261.4H652L652,252.2H651L651,248.9H650L650,243.4H649L649,237.4H648L648,233.2H647L647,229.2H646L646,226.2H645L645,220.9H644L644,218.7H643L643,217.2H642L642,214.4H641L641,211.4H640L640,210.9H639L639,209.4H638L638,209.9H637L637,209.7H636L636,210.2H635L635,211.2H634L634,212.4H633L633,214.4H632L632,216.4H631L631,218.7H630L630,221.9H629L629,226.4H628L628,230.4H627L627,232.4H626L626,237.2H625L625,242.4H624L624,247.4H623L623,254.7H622L622,260.4H621L621,266.2H620L620,273.9H619L619,279.4H618L618,285.9H617L617,292.2H616L616,300.2H615L615,307.2H614L614,316.4H613L613,324.4H612L612,332.7H611L611,339.2H610L610,347.7H609L609,355.9H608L608,365.4H607L607,372.2H606L606,383.2H605L605,391.2H604L604,400.2H603L603,407.2H602L602,416.9H601L601,426.2H600L600,431.4H599L599,443.4H598L598,453.2H597L597,460.9H596L596,470.4H595L595,479.4H594L594,485.9H593L593,494.2H592L592,503.9H591L591,510.4H590L590,518.0H589L589,526.5H588L588,533.7H587L587,540.7H586L586,550.2H585L585,556.2H584L584,559.2H583L583,567.2H582L582,571.2H581L581,578.0H580L580,584.0H579L579,588.5H578L578,595.5H577L577,599.0H576L576,604.0H575L575,608.5H574L574,611.5H573L573,613.7H572L572,617.2H571L571,620.0H570L570,622.7H569L569,624.7H568L568,628.0H567L567,627.7H566L566,629.7H565L565,629.5H564L564,630.7H563L563,631.2H562L562,631.5H561L561,630.0H560L560,629.2H559L559,629.2H558L558,628.2H557L557,626.5H556L556,624.0H555L555,622.5H554L554,619.7H553L553,617.2H552L552,613.0H551L551,610.2H550L550,605.0H549L549,601.7H548L548,598.2H547L547,593.2H546L546,589.5H545L545,585.5H544L544,578.5H543L543,575.2H542L542,567.7H541L541,563.5H540L540,556.5H539L539,551.2H538L538,544.7H537L537,535.7H536L536,530.7H535L535,524.7H534L534,517.5H533L533,510.2H532L532,502.4H531L531,493.2H530L530,488.2H529L529,481.7H528L528,470.7H527L527,461.4H526L526,457.7H525L525,449.7H524L524,440.4H523L523,433.9H522L522,425.9H521L521,419.4H520L520,411.2H519L519,402.2H518L518,396.2H517L517,387.2H516L516,378.4H515L515,371.9H514L514,365.2H513L513,356.7H512L512,350.4H511L511,341.7H510L510,336.2H509L509,328.9H508L508,322.2H507L507,314.4H506L506,307.7H505L505,301.2H504L504,295.9H503L503,290.7H502L502,283.2H501L501,278.9H500L500,272.7H499L499,267.4H498L498,262.4H497L497,258.2H496L496,253.2H495L495,246.7H494L494,244.4H493L493,240.4H492L492,236.4H491L491,232.4H490L490,228.9H489L489,226.4H488L488,223.9H487L487,220.7H486L486,218.9H485L485,217.2H484L484,213.2H483L483,214.2H482L482,212.7H481L481,210.9H480L480,210.9H479L479,209.9H478L478,210.4H477L477,208.9H476L476,210.2H475L475,209.9H474L474,211.9H473L473,211.7H472L472,214.2H471L471,215.7H470L470,217.7H469L469,218.7H468L468,222.2H467L467,223.2H466L466,226.2H465L465,228.9H464L464,231.9H463L463,235.7H462L462,239.4H461L461,243.4H460L460,246.9H459L459,249.4H458L458,256.7H457L457,258.4H456L456,265.2H455L455,269.7H454L454,272.7H453L453,280.2H452L452,284.7H451L451,289.9H450L450,295.2H449L449,302.2H448L448,306.7H447L447,312.7H446L446,319.9H445L445,325.4H444L444,330.7H443L443,335.9H442L442,343.7H441L441,348.9H440L440,355.7H439L439,361.9H438L438,369.4H437L437,375.2H436L436,381.2H435L435,388.7H434L434,393.9H433L433,401.4H432L432,408.4H431L431,415.2H430L430,420.2H429L429,427.4H428L428,435.4H427L427,442.4H426L426,447.9H425L425,454.7H424L424,459.4H423L423,466.9H422L422,472.4H421L421,479.4H420L420,485.9H419L419,492.9H418L418,497.7H417L417,503.2H416L416,509.4H415L415,514.7H414L414,519.5H413L413,527.2H412L412,530.5H411L411,538.5H410L410,542.5H409L409,549.0H408L408,550.7H407L407,558.2H406L406,563.2H405L405,568.2H404L404,571.5H403L403,576.2H402L402,579.2H401L401,584.7H400L400,589.5H399L399,592.7H398L398,594.2H397L397,599.7H396L396,602.0H395L395,605.5H394L394,607.0H393L393,612.0H392L392,613.0H391L391,614.2H390L390,619.0H389L389,619.7H388L388,621.5H387L387,624.0H386L386,627.2H385L385,627.2H384L384,629.2H383L383,631.2H382L382,631.7H381L381,632.7H380L380,633.0H379L379,633.7H378L378,633.2H377L377,635.7H376L376,633.7H375L375,634.5H374L374,633.2H373L373,633.7H372L372,633.5H371L371,631.5H370L370,630.5H369L369,630.5H368L368,628.2H367L367,628.0H366L366,625.2H365L365,624.5H364L364,623.5H363L363,620.5H362L362,618.0H361L361,615.7H360L360,612.5H359L359,611.0H358L358,608.5H357L357,605.2H356L356,603.5H355L355,599.0H354L354,595.7H353L353,594.5H352L352,591.0H351L351,586.7H350L350,583.2H349L349,578.2H348L348,575.5H347L347,571.5H346L346,569.0H345L345,563.2H344L344,559.7H343L343,555.7H342L342,551.0H341L341,546.2H340L340,541.5H339L339,536.5H338L338,532.2H337L337,530.0H336L336,525.7H335L335,520.5H334L334,515.0H333L333,509.7H332L332,505.7H331L331,499.4H330L330,494.2H329L329,489.7H328L328,483.9H327L327,479.7H326L326,474.2H325L325,470.2H324L324,465.2H323L323,458.2H322L322,454.9H321L321,447.9H320L320,443.4H319L319,438.4H318L318,433.2H317L317,428.2H316L316,424.4H315L315,418.9H314L314,412.9H313L313,409.4H312L312,402.4H311L311,398.4H310L310,393.4H309L309,387.9H308L308,382.7H307L307,377.4H306L306,373.9H305L305,368.2H304L304,363.4H303L303,358.2H302L302,354.4H301L301,349.7H300L300,343.9H299L299,339.4H298L298,335.4H297L297,329.2H296L296,326.7H295L295,319.9H294L294,317.4H293L293,313.9H292L292,308.9H291L291,305.9H290L290,301.9H289L289,296.4H288L288,292.4H287L287,288.4H286L286,285.2H285L285,282.7H284L284,277.4H283L283,274.4H282L282,270.2H281L281,267.7H280L280,263.4H279L279,260.7H278L278,257.7H277L277,255.2H276L276,250.9H275L275,248.2H274L274,246.7H273L273,244.2H272L272,240.2H271L271,237.9H270L270,235.7H269L269,233.4H268L268,231.7H267L267,228.2H266L266,227.4H265L265,225.2H264L264,222.7H263L263,222.9H262L262,218.9H261L261,218.4H260L260,216.9H259L259,216.4H258L258,213.2H257L257,212.4H256L256,211.7H255L255,209.4H254L254,209.2H253L253,207.9H252L252,207.7H251L251,206.2H250L250,205.4H249L249,205.7H248L248,204.9H247L247,204.7H246L246,204.7H245L245,204.9H244L244,205.4H243L243,204.2H242L242,203.4H241L241,204.9H240L240,203.4H239L239,204.9H238L238,205.4H237L237,206.4H236L236,205.9H235L235,206.2H234L234,206.7H233L233,207.9H232L232,208.4H231L231,210.2H230L230,210.4H229L229,212.2H228L228,213.2H227L227,215.2H226L226,216.2H225L225,216.9H224L224,217.9H223L223,218.9H222L222,221.9H221L221,221.7H220L220,225.4H219L219,227.4H218L218,227.7H217L217,230.2H216L216,231.4H215L215,232.7H214L214,235.9H213L213,237.4H212L212,239.4H211L211,242.9H210L210,242.2H209L209,246.4H208L208,247.7H207L207,250.7H206L206,253.2H205L205,255.7H204L204,257.4H203L203,260.7H202L202,263.2H201L201,265.7H200L200,267.2H199L199,270.2H198L198,271.7H197L197,275.2H196L196,278.4H195L195,280.4H194L194,282.9H193L193,286.4H192L192,289.2H191L191,291.2H190L190,294.9H189L189,297.9H188L188,298.9H187L187,302.9H186L186,305.4H185L185,308.7H184L184,311.9H183L183,314.4H182L182,316.7H181L181,320.9H180L180,323.2H179L179,325.7H178L178,329.9H177L177,332.2H176L176,335.4H175L175,339.7H174L174,340.4H173L173,344.4H172L172,346.4H171L171,350.7H170L170,352.2H169L169,355.9H168L168,359.2H167L167,362.4H166L166,365.2H165L165,367.9H164L164,370.9H163L163,375.2H162L162,376.7H161L161,380.2H160L160,383.7H159L159,387.4H158L158,389.9H157L157,393.2H156L156,395.4H155L155,399.7H154L154,401.2H153L153,404.4H152L152,406.4H151L151,410.2H150L150,413.4H149L149,415.4H148L148,419.4H147L147,421.7H146L146,424.7H145L145,426.2H144L144,429.9H143L143,433.2H142L142,436.4H141L141,438.9H140L140,441.7H139L139,444.4H138L138,446.4H137L137,449.2H136L136,453.2H135L135,454.2H134L134,457.7H133L133,459.9H132L132,461.2H131L131,466.2H130L130,468.7H129L129,469.9H128L128,472.7H127L127,476.9H126L126,477.4H125L125,480.4H124L124,482.7H123L123,485.2H122L122,488.2H121L121,489.7H120L120,492.7H119L119,495.7H118L118,496.9H117L117,498.9H116L116,502.9H115L115,503.9H114L114,505.7H113L113,508.2H112L112,509.4H111L111,512.5H110L110,516.5H109L109,518.2H108L108,520.0H107L107,521.7H106L106,524.2H105L105,525.0H104L104,527.2H103L103,530.2H102L102,532.5H101L101,533.0H100L100,535.5H99L99,536.7H98L98,538.5H97L97,540.0H96L96,542.2H95L95,544.7H94L94,544.5H93L93,548.0H92L92,549.2H91L91,550.7H90L90,552.5H89L89,554.7H88L88,555.7H87L87,558.0H86L86,560.0H85L85,560.2H84L84,562.5H83L83,563.0H82L82,565.2H81L81,566.5H80L80,567.5H79L79,568.7H78L78,569.7H77L77,572.5H76L76,574.0H75L75,574.0H74L74,577.2H73L73,576.7H72L72,578.7H71L71,578.5H70L70,581.2H69L69,583.0H68L68,584.2H67L67,585.2H66L66,584.2H65L65,588.0H64L64,586.7H63L63,588.5H62L62,590.2H61L61,590.7H60L60,591.7H59L59,593.5H58L58,592.0H57L57,596.2H56L56,596.5H55L55,597.0H54L54,598.0H53L53,597.2H52L52,600.0H51L51,599.7H50L50,600.2H49L49,602.2H48L48,604.2H47L47,604.5H46L46,602.5H45L45,605.0H44L44,607.0H43L43,606.5H42L42,608.2H41L41,608.0H40L40,608.7H39L39,608.7H38L38,611.2H37L37,610.5H36L36,610.7H35L35,612.0H34Z" fill="#00ffff"/>
<path d="M34,232.4L34,202.9H35L35,203.2H36L36,203.7H37L37,208.2H38L38,204.7H39L39,208.7H40L40,206.7H41L41,205.2H42L42,207.7H43L43,206.7H44L44,206.4H45L45,209.7H46L46,210.7H47L47,213.2H48L48,211.2H49L49,214.7H50L50,211.9H51L51,210.9H52L52,211.2H53L53,216.4H54L54,218.2H55L55,216.7H56L56,218.2H57L57,219.9H58L58,219.7H59L59,220.7H60L60,221.7H61L61,222.9H62L62,219.4H63L63,224.7H64L64,223.7H65L65,226.4H66L66,227.4H67L67,229.7H68L68,228.4H69L69,230.4H70L70,231.4H71L71,230.2H72L72,231.2H73L73,234.7H74L74,233.7H75L75,235.7H76L76,236.2H77L77,238.4H78L78,240.9H79L79,242.2H80L80,243.7H81L81,243.9H82L82,244.2H83L83,245.9H84L84,247.7H85L85,251.4H86L86,250.4H87L87,250.2H88L88,256.4H89L89,255.2H90L90,258.9H91L91,258.9H92L92,260.7H93L93,260.9H94L94,264.9H95L95,262.9H96L96,265.9H97L97,269.4H98L98,270.4H99L99,271.4H100L100,276.2H101L101,275.2H102L102,279.2H103L103,277.7H104L104,283.4H105L105,283.4H106L106,286.4H107L107,285.9H108L108,289.4H109L109,290.2H110L110,293.9H111L111,298.2H112L112,298.7H113L113,299.9H114L114,301.9H115L115,306.7H116L116,305.2H117L117,308.7H118L118,312.7H119L119,312.9H120L120,313.7H121L121,319.4H122L122,320.2H123L123,322.9H124L124,323.7H125L125,325.9H126L126,328.9H127L127,331.7H128L128,334.9H129L129,337.9H130L130,340.4H131L131,342.2H132L132,343.9H133L133,348.9H134L134,350.2H135L135,352.2H136L136,357.9H137L137,360.4H138L138,361.2H139L139,365.2H140L140,364.7H141L141,369.7H142L142,370.2H143L143,374.9H144L144,375.4H145L145,381.9H146L146,381.7H147L147,387.9H148L148,388.7H149L149,392.7H150L150,394.2H151L151,395.4H152L152,402.9H153L153,405.7H154L154,406.4H155L155,409.2H156L156,410.7H157L157,414.9H158L158,419.4H159L159,422.9H160L160,424.7H161L161,431.2H162L162,431.4H163L163,434.2H164L164,435.4H165L165,438.7H166L166,443.7H167L167,445.9H168L168,448.2H169L169,451.4H170L170,451.9H171L171,455.7H172L172,463.2H173L173,463.2H174L174,467.2H175L175,470.2H176L176,474.4H177L177,473.7H178L178,477.7H179L179,479.2H180L180,484.4H181L181,488.7H182L182,488.7H183L183,494.7H184L184,495.4H185L185,498.7H186L186,501.9H187L187,509.7H188L188,508.4H189L189,510.4H190L190,515.0H191L191,516.0H192L192,519.7H193L193,521.5H194L194,523.2H195L195,528.7H196L196,531.2H197L197,534.0H198L198,537.7H199L199,539.0H200L200,541.2H201L201,545.7H202L202,547.7H203L203,550.0H204L204,549.0H205L205,554.2H206L206,553.2H207L207,558.2H208L208,559.0H209L209,563.0H210L210,566.0H211L211,567.0H212L212,569.5H213L213,571.0H214L214,573.0H215L215,575.0H216L216,578.2H217L217,580.5H218L218,580.2H219L219,582.5H220L220,582.5H221L221,585.5H222L222,587.0H223L223,587.2H224L224,592.0H225L225,591.5H226L226,594.2H227L227,593.5H228L228,595.7H229L229,595.2H230L230,597.7H231L231,599.0H232L232,601.0H233L233,599.0H234L234,600.2H235L235,603.7H236L236,606.0H237L237,602.0H238L238,601.0H239L239,604.7H240L240,605.0H241L241,605.0H242L242,604.7H243L243,604.0H244L244,604.0H245L245,604.5H246L246,605.7H247L247,604.7H248L248,604.0H249L249,603.7H250L250,605.5H251L251,602.5H252L252,601.7H253L253,601.7H254L254,601.0H255L255,601.2H256L256,599.5H257L257,597.2H258L258,599.7H259L259,594.7H260L260,594.7H261L261,592.5H262L262,591.5H263L263,589.2H264L264,588.0H265L265,587.5H266L266,582.2H267L267,583.0H268L268,584.2H269L269,578.7H270L270,574.7H271L271,574.2H272L272,573.0H273L273,571.0H274L274,567.7H275L275,565.0H276L276,561.0H277L277,558.0H278L278,556.0H279L279,553.2H280L280,550.7H281L281,545.2H282L282,542.2H283L283,543.0H284L284,536.5H285L285,532.0H286L286,531.2H287L287,527.2H288L288,520.7H289L289,518.2H290L290,513.0H291L291,510.4H292L292,508.9H293L293,504.7H294L294,499.2H295L295,494.9H296L296,491.9H297L297,485.4H298L298,483.9H299L299,480.9H300L300,475.4H301L301,471.2H302L302,465.7H303L303,458.4H304L304,457.4H305L305,452.7H306L306,447.9H307L307,439.4H308L308,440.7H309L309,434.4H310L310,429.4H311L311,422.2H312L312,417.9H313L313,412.2H314L314,407.7H315L315,402.4H316L316,395.9H317L317,394.9H318L318,388.4H319L319,384.2H320L320,381.2H321L321,373.4H322L322,368.9H323L323,366.2H324L324,361.4H325L325,353.4H326L326,348.7H327L327,343.4H328L328,340.9H329L329,335.4H330L330,330.9H331L331,325.7H332L332,322.4H333L333,317.4H334L334,311.4H335L335,307.2H336L336,304.9H337L337,300.4H338L338,293.9H339L339,287.2H340L340,283.7H341L341,279.2H342L342,274.4H343L343,272.4H344L344,266.9H345L345,263.2H346L346,261.7H347L347,253.9H348L348,252.7H349L349,250.9H350L350,246.4H351L351,246.4H352L352,239.2H353L353,237.2H354L354,231.7H355L355,228.9H356L356,226.4H357L357,221.9H358L358,220.9H359L359,220.2H360L360,216.9H361L361,215.7H362L362,211.7H363L363,208.2H364L364,207.7H365L365,205.9H366L366,202.9H367L367,202.4H368L368,202.9H369L369,201.9H370L370,198.9H371L371,198.9H372L372,197.4H373L373,195.2H374L374,196.7H375L375,194.9H376L376,194.4H377L377,194.7H378L378,193.2H379L379,195.9H380L380,197.4H381L381,201.2H382L382,197.7H383L383,195.9H384L384,202.4H385L385,202.2H386L386,204.4H387L387,204.9H388L388,209.2H389L389,206.4H390L390,211.2H391L391,210.9H392L392,214.9H393L393,216.9H394L394,221.2H395L395,224.2H396L396,224.4H397L397,230.9H398L398,230.2H399L399,235.2H400L400,238.9H401L401,245.2H402L402,247.7H403L403,252.9H404L404,259.2H405L405,260.7H406L406,263.9H407L407,269.9H408L408,271.9H409L409,278.4H410L410,284.7H411L411,289.4H412L412,293.9H413L413,298.2H414L414,301.4H415L415,308.7H416L416,315.4H417L417,321.2H418L418,325.9H419L419,332.2H420L420,336.2H421L421,343.9H422L422,349.9H423L423,356.7H424L424,360.7H425L425,369.9H426L426,372.9H427L427,378.4H428L428,386.4H429L429,393.9H430L430,397.9H431L431,407.2H432L432,413.4H433L433,419.7H434L434,424.9H435L435,429.4H436L436,434.2H437L437,442.2H438L438,448.7H439L439,453.9H440L440,459.4H441L441,469.7H442L442,472.7H443L443,478.9H444L444,483.7H445L445,489.2H446L446,497.9H447L447,501.9H448L448,505.7H449L449,511.4H450L450,517.2H451L451,523.5H452L452,528.7H453L453,532.5H454L454,539.7H455L455,541.0H456L456,544.5H457L457,550.2H458L458,554.5H459L459,559.5H460L460,563.2H461L461,566.7H462L462,567.0H463L463,572.7H464L464,571.7H465L465,577.5H466L466,581.0H467L467,583.0H468L468,584.5H469L469,589.0H470L470,590.2H471L471,590.7H472L472,593.7H473L473,594.2H474L474,595.0H475L475,594.5H476L476,595.7H477L477,595.5H478L478,597.5H479L479,595.2H480L480,595.5H481L481,596.0H482L482,595.2H483L483,593.0H484L484,592.0H485L485,590.2H486L486,587.7H487L487,585.2H488L488,582.0H489L489,579.2H490L490,579.7H491L491,577.5H492L492,570.5H493L493,566.5H494L494,565.0H495L495,558.5H496L496,556.7H497L497,550.7H498L498,546.0H499L499,540.7H500L500,540.0H501L501,529.5H502L502,528.7H503L503,523.2H504L504,514.7H505L505,511.9H506L506,502.7H507L507,498.2H508L508,491.4H509L509,485.4H510L510,479.2H511L511,472.9H512L512,463.2H513L513,457.9H514L514,451.9H515L515,444.7H516L516,436.7H517L517,430.9H518L518,424.7H519L519,417.7H520L520,407.7H521L521,400.9H522L522,395.4H523L523,386.4H524L524,380.2H525L525,371.7H526L526,363.7H527L527,356.9H528L528,351.2H529L529,342.7H530L530,334.9H531L531,328.4H532L532,322.4H533L533,314.2H534L534,308.4H535L535,300.9H536L536,297.4H537L537,288.7H538L538,281.2H539L539,275.2H540L540,272.7H541L541,263.4H542L542,259.7H543L543,252.9H544L544,247.7H545L545,244.2H546L546,239.4H547L547,239.4H548L548,231.7H549L549,225.2H550L550,222.4H551L551,219.4H552L552,219.2H553L553,213.4H554L554,213.2H555L555,207.4H556L556,208.9H557L557,203.9H558L558,202.4H559L559,202.2H560L560,197.4H561L561,200.7H562L562,201.2H563L563,199.7H564L564,197.2H565L565,198.7H566L566,203.4H567L567,202.4H568L568,203.2H569L569,205.2H570L570,209.7H571L571,210.7H572L572,213.7H573L573,213.4H574L574,218.2H575L575,223.4H576L576,229.2H577L577,230.4H578L578,235.4H579L579,240.7H580L580,244.2H581L581,251.9H582L582,256.9H583L583,264.4H584L584,269.9H585L585,272.2H586L586,279.4H587L587,289.7H588L588,295.2H589L589,303.4H590L590,306.4H591L591,313.2H592L592,319.4H593L593,327.7H594L594,337.4H595L595,343.4H596L596,353.9H597L597,361.2H598L598,369.2H599L599,379.2H600L600,386.9H601L601,394.2H602L602,401.7H603L603,414.7H604L604,418.7H605L605,428.4H606L606,436.9H607L607,444.4H608L608,452.7H609L609,456.7H610L610,470.7H611L611,474.4H612L612,481.4H613L613,489.4H614L614,495.9H615L615,504.7H616L616,509.2H617L617,518.5H618L618,522.5H619L619,529.2H620L620,538.2H621L621,543.0H622L622,548.2H623L623,553.2H624L624,557.2H625L625,560.5H626L626,566.7H627L627,571.0H628L628,570.5H629L629,576.7H630L630,579.7H631L631,581.2H632L632,584.2H633L633,586.2H634L634,590.5H635L635,591.2H636L636,589.0H637L637,593.2H638L638,592.2H639L639,588.2H640L640,590.5H641L641,588.2H642L642,587.2H643L643,587.2H644L644,584.7H645L645,581.2H646L646,575.5H647L647,572.5H648L648,569.0H649L649,564.7H650L650,559.5H651L651,558.0H652L652,548.2H653L653,541.7H654L654,535.2H655L655,532.5H656L656,525.2H657L657,519.5H658L658,510.2H659L659,505.2H660L660,494.4H661L661,492.4H662L662,482.4H663L663,470.4H664L664,464.9H665L665,456.7H666L666,446.9H667L667,437.2H668L668,431.7H669L669,419.9H670L670,413.4H671L671,401.4H672L672,392.7H673L673,385.2H674L674,376.9H675L675,364.4H676L676,357.2H677L677,348.9H678L678,339.7H679L679,329.4H680L680,322.9H681L681,313.9H682L682,308.7H683L683,301.9H684L684,292.2H685L685,283.2H686L686,275.7H687L687,268.9H688L688,265.7H689L689,257.2H690L690,246.7H691L691,244.2H692L692,242.7H693L693,235.2H694L694,228.7H695L695,224.7H696L696,218.4H697L697,216.7H698L698,214.9H699L699,211.4H700L700,209.2H701L701,204.9H702L702,203.2H703L703,205.2H704L704,200.2H705L705,201.4H706L706,203.4H707L707,204.4H708L708,205.4H709L709,205.2H710L710,208.4H711L711,212.4H712L712,215.7H713L713,219.7H714L714,222.9H715L715,226.4H716L716,231.4H717L717,236.2H718L718,239.2H719L719,248.7H720L720,252.7H721L721,259.9H722L722,268.9H723L723,275.2H724L724,281.2H725L725,291.2H726L726,298.4H727L727,306.2H728L728,320.2H729L729,328.4H730L730,332.4H731L731,342.2H732L732,348.7H733L733,360.7H734L734,371.4H735L735,379.2H736L736,390.2H737L737,404.2H738L738,411.9H739L739,420.7H740L740,430.4H741L741,440.2H742L742,448.9H743L743,457.4H744L744,467.7H745L745,474.9H746L746,483.7H747L747,495.7H748L748,502.7H749L749,510.2H750L750,517.2H751L751,526.5H752L752,536.0H753L753,539.2H754L754,546.2H755L755,554.2H756L756,557.2H757L757,563.5H758L758,566.7H759L759,572.2H760L760,574.7H761L761,578.0H762L762,580.0H763L763,584.7H764L764,580.5H765L765,587.0H766L766,589.0H767L767,586.5H768L768,589.5H769L769,584.5H770L770,585.5H771L771,581.2H772L772,581.0H773L773,576.2H774L774,573.2H775L775,568.2H776L776,564.7H777L777,563.0H778L778,551.0H779L779,543.2H780L780,540.5H781L781,533.7H782L782,527.5H783L783,517.5H784L784,510.9H785L785,503.4H786L786,492.2H787L787,483.2H788L788,474.2H789L789,467.7H790L790,455.2H791L791,444.2H792L792,433.4H793L793,425.2H794L794,415.2H795L795,404.4H796L796,393.9H797L797,388.9H798L798,371.7H799L799,361.2H800L800,353.9H801L801,339.4H802L802,333.4H803L803,321.4H804L804,312.9H805L805,302.9H806L806,293.2H807L807,285.7H808L808,273.9H809L809,269.9H810L810,261.2H811L811,251.7H812L812,246.7H813L813,238.4H814L814,234.4H815L815,228.9H816L816,224.9H817L817,222.7H818L818,215.7H819L819,213.2H820L820,211.9H821L821,206.7H822L822,205.7H823L823,205.4H824L824,205.4H825L825,203.7H826L826,204.7H827L827,204.7H828L828,206.7H829L829,209.7H830L830,211.7H831L831,216.7H832L832,220.2H833L833,225.9H834L834,230.2H835L835,237.2H836L836,244.9H837L837,252.4H838L838,260.4H839L839,265.2H840L840,272.4H841L841,283.2H842L842,289.9H843L843,300.2H844L844,312.4H845L845,321.7H846L846,333.2H847L847,338.4H848L848,351.7H849L849,364.9H850L850,373.9H851L851,381.7H852L852,394.7H853L853,403.9H854L854,417.4H855L855,428.4H856L856,439.9H857L857,453.2H858L858,461.9H859L859,474.2H860L860,483.9H861L861,491.7H862L862,501.9H863L863,506.7H864L864,518.2H865L865,526.7H866L866,537.2H867L867,546.5H868L868,551.2H869L869,555.7H870L870,563.2H871L871,567.7H872L872,571.2H873L873,577.0H874L874,578.0H875L875,583.7H876L876,583.5H877L877,586.2H878L878,586.5H879L879,584.5H880L880,585.2H881L881,584.5H882L882,581.5H883L883,580.0H884L884,573.2H885L885,573.2H886L886,566.5H887L887,561.7H888L888,557.2H889L889,547.5H890L890,540.2H891L891,532.0H892L892,523.7H893L893,514.5H894L894,508.4H895L895,498.7H896L896,485.4H897L897,476.4H898L898,465.4H899L899,455.4H900L900,442.4H901L901,429.7H902L902,419.9H903L903,405.7H904L904,396.4H905L905,384.2H906L906,373.2H907L907,362.7H908L908,351.2H909L909,341.4H910L910,327.4H911L911,322.9H912L912,308.7H913L913,297.2H914L914,284.9H915L915,277.2H916L916,271.4H917L917,260.7H918L918,251.4H919L919,240.9H920L920,235.9H921L921,231.2H922L922,225.4H923L923,222.2H924L924,216.4H925L925,211.4H926L926,209.2H927L927,205.9H928L928,204.4H929L929,202.4H930L930,204.9H931L931,205.7H932L932,206.4H933L933,207.2H934L934,211.4H935L935,214.9H936L936,219.2H937L937,227.9H938L938,229.2H939L939,237.7H940L940,244.9H941L941,251.2H942L942,255.9H943L943,268.2H944L944,276.4H945L945,285.2H946L946,295.4H947L947,306.4H948L948,317.9H949L949,328.4H950L950,336.7H951L951,349.7H952L952,366.7H953L953,377.4H954L954,387.7H955L955,402.7H956L956,412.7H957L957,421.9H958L958,436.4H959L959,450.7H960L960,458.7H961L961,472.2H962L962,479.2H963L963,493.2H964L964,503.2H965L965,516.2H966L966,522.2H967L967,533.0H968L968,539.0H969L969,549.0H970L970,555.5H971L971,560.0H972L972,565.5H973L973,570.5H974L974,575.5H975L975,577.2H976L976,581.0H977L977,581.7H978L978,584.5H979L979,580.5H980L980,584.0H981L981,582.2H982L982,579.2H983L983,572.5H984L984,572.5H985L985,563.0H986L986,556.7H987L987,553.2H988L988,546.2H989L989,533.7H990L990,528.7H991L991,520.5H992L992,510.2H993L993,504.2H994L994,488.2H995L995,478.7H996L996,469.4H997L997,453.2H998L998,440.4H999L999,430.9H1000L1000,417.4H1001L1001,407.7H1002L1002,394.9H1003L1003,377.4H1004L1004,362.7H1005L1005,349.2H1006L1006,337.4H1007L1007,330.7H1008L1008,316.4H1009L1009,306.4H1010L1010,295.2H1011L1011,282.7H1012L1012,276.4H1013L1013,265.4H1014L1014,255.2H1015L1015,244.4H1016L1016,238.7H1017L1017,230.7H1018L1018,225.7H1019L1019,224.4H1020L1020,216.4H1021L1021,213.4H1022L1022,210.9H1023L1023,205.9H1024L1024,205.4H1025L1025,204.9H1026L1026,205.9H1027L1027,209.2H1028L1028,209.7H1029L1029,210.7H1030L1030,215.9H1031L1031,221.2H1032L1032,225.9H1033L1033,231.2H1034L1034,241.2H1035L1035,243.7H1036L1036,254.7H1037L1037,265.9H1038L1038,273.7H1039L1039,281.9H1040L1040,295.4H1041L1041,306.7H1042L1042,316.9H1043L1043,328.7H1044L1044,339.7H1045L1045,357.2H1046L1046,367.9H1047L1047,380.2H1048L1048,394.9H1049L1049,409.4H1050L1050,419.2H1051L1051,435.2H1052L1052,446.4H1053L1053,457.9H1054L1054,472.2H1055L1055,481.9H1056L1056,495.7H1057L1057,504.2H1058L1058,516.0H1059L1059,526.0H1060L1060,536.5H1061L1061,544.0H1062L1062,555.5H1063L1063,560.5H1064L1064,565.2H1065L1065,570.5H1066L1066,576.0H1067L1067,578.2H1068L1068,579.5H1069L1069,581.5H1070L1070,581.5H1071L1071,582.0H1072L1072,580.2H1073L1073,580.0H1074L1074,574.5H1075L1075,567.7H1076L1076,565.0H1077L1077,562.2H1078L1078,551.0H1079L1079,541.5H1080L1080,533.0H1081L1081,528.2H1082L1082,515.7H1083L1083,501.7H1084L1084,495.9H1085L1085,482.7H1086L1086,471.9H1087L1087,455.4H1088L1088,441.2H1089L1089,428.7H1090L1090,415.4H1091L1091,401.7H1092L1092,386.7H1093L1093,374.4H1094L1094,362.2H1095L1095,346.7H1096L1096,335.4H1097L1097,321.9H1098L1098,309.2H1099L1099,296.9H1100L1100,285.2H1101L1101,274.2H1102L1102,262.7H1103L1103,253.2H1104L1104,245.4H1105L1105,238.2H1106L1106,230.9H1107L1107,227.9H1108L1108,218.9H1109L1109,214.9H1110L1110,212.2H1111L1111,208.9H1112L1112,207.2H1113L1113,205.9H1114L1114,204.9H1115L1115,205.9H1116L1116,208.7H1117L1117,212.9H1118L1118,216.4H1119L1119,218.9H1120L1120,229.4H1121L1121,236.2H1122L1122,240.7H1123L1123,248.2H1124L1124,262.2H1125L1125,274.2H1126L1126,284.4H1127L1127,316.9H1126L1126,306.2H1125L1125,296.4H1124L1124,284.7H1123L1123,273.4H1122L1122,266.7H1121L1121,260.7H1120L1120,252.2H1119L1119,249.2H1118L1118,244.2H1117L1117,240.7H1116L1116,238.2H1115L1115,235.4H1114L1114,236.7H1113L1113,234.4H1112L1112,238.4H1111L1111,242.4H1110L1110,246.9H1109L1109,249.2H1108L1108,253.9H1107L1107,262.7H1106L1106,271.2H1105L1105,279.2H1104L1104,282.2H1103L1103,301.9H1102L1102,306.2H1101L1101,318.2H1100L1100,331.2H1099L1099,344.4H1098L1098,360.2H1097L1097,368.2H1096L1096,382.9H1095L1095,397.7H1094L1094,411.4H1093L1093,426.9H1092L1092,436.7H1091L1091,452.4H1090L1090,462.2H1089L1089,477.7H1088L1088,484.9H1087L1087,504.4H1086L1086,515.2H1085L1085,525.5H1084L1084,540.0H1083L1083,548.5H1082L1082,554.7H1081L1081,568.2H1080L1080,576.7H1079L1079,583.5H1078L1078,589.7H1077L1077,594.7H1076L1076,604.5H1075L1075,606.7H1074L1074,607.5H1073L1073,613.0H1072L1072,612.0H1071L1071,615.0H1070L1070,613.7H1069L1069,612.7H1068L1068,610.7H1067L1067,604.5H1066L1066,601.0H1065L1065,598.7H1064L1064,590.0H1063L1063,586.0H1062L1062,578.5H1061L1061,565.5H1060L1060,557.2H1059L1059,551.5H1058L1058,540.2H1057L1057,530.2H1056L1056,519.2H1055L1055,505.9H1054L1054,495.9H1053L1053,481.7H1052L1052,473.7H1051L1051,459.7H1050L1050,445.4H1049L1049,428.2H1048L1048,418.7H1047L1047,402.2H1046L1046,394.7H1045L1045,377.2H1044L1044,363.4H1043L1043,354.2H1042L1042,339.9H1041L1041,330.4H1040L1040,318.9H1039L1039,310.9H1038L1038,296.7H1037L1037,284.2H1036L1036,279.7H1035L1035,273.7H1034L1034,263.7H1033L1033,256.4H1032L1032,253.2H1031L1031,249.7H1030L1030,240.4H1029L1029,238.7H1028L1028,237.2H1027L1027,233.7H1026L1026,237.2H1025L1025,236.9H1024L1024,235.7H1023L1023,240.4H1022L1022,243.4H1021L1021,249.2H1020L1020,255.2H1019L1019,260.7H1018L1018,264.2H1017L1017,274.2H1016L1016,280.9H1015L1015,290.9H1014L1014,299.4H1013L1013,306.7H1012L1012,319.9H1011L1011,329.4H1010L1010,343.2H1009L1009,353.2H1008L1008,365.7H1007L1007,377.7H1006L1006,390.4H1005L1005,401.4H1004L1004,416.4H1003L1003,425.2H1002L1002,439.2H1001L1001,452.4H1000L1000,466.4H999L999,478.9H998L998,487.7H997L997,498.9H996L996,515.0H995L995,525.2H994L994,533.0H993L993,540.7H992L992,551.7H991L991,562.2H990L990,569.7H989L989,578.0H988L988,584.5H987L987,591.5H986L986,595.2H985L985,602.0H984L984,607.0H983L983,609.5H982L982,611.2H981L981,614.7H980L980,614.5H979L979,612.7H978L978,611.7H977L977,612.7H976L976,611.2H975L975,607.0H974L974,599.7H973L973,600.7H972L972,593.2H971L971,589.5H970L970,580.2H969L969,573.5H968L968,564.7H967L967,555.2H966L966,547.2H965L965,539.7H964L964,526.0H963L963,518.2H962L962,506.4H961L961,494.4H960L960,481.7H959L959,471.2H958L958,459.4H957L957,449.2H956L956,435.2H955L955,422.7H954L954,411.4H953L953,399.4H952L952,386.9H951L951,373.9H950L950,362.4H949L949,346.7H948L948,341.9H947L947,324.9H946L946,316.2H945L945,310.4H944L944,301.7H943L943,289.4H942L942,283.4H941L941,272.9H940L940,266.2H939L939,260.7H938L938,253.7H937L937,248.2H936L936,246.4H935L935,242.2H934L934,239.4H933L933,238.4H932L932,237.7H931L931,233.4H930L930,231.9H929L929,237.4H928L928,238.7H927L927,239.7H926L926,240.4H925L925,244.7H924L924,243.9H923L923,256.7H922L922,261.9H921L921,267.4H920L920,278.7H919L919,281.4H918L918,293.9H917L917,298.9H916L916,311.2H915L915,317.4H914L914,332.2H913L913,339.9H912L912,352.2H911L911,359.7H910L910,372.7H909L909,385.2H908L908,398.2H907L907,411.2H906L906,416.9H905L905,431.9H904L904,440.9H903L903,457.2H902L902,466.9H901L901,477.9H900L900,489.9H899L899,500.4H898L898,510.4H897L897,521.5H896L896,529.5H895L895,540.7H894L894,549.5H893L893,554.2H892L892,566.0H891L891,575.5H890L890,580.7H889L889,588.0H888L888,591.2H887L887,600.2H886L886,600.7H885L885,605.7H884L884,609.0H883L883,612.5H882L882,614.2H881L881,615.0H880L880,615.0H879L879,613.7H878L878,617.0H877L877,613.7H876L876,612.2H875L875,611.0H874L874,607.2H873L873,605.2H872L872,600.7H871L871,591.0H870L870,588.7H869L869,583.0H868L868,575.2H867L867,568.5H866L866,560.7H865L865,551.5H864L864,540.5H863L863,532.2H862L862,527.2H861L861,515.5H860L860,504.2H859L859,497.4H858L858,486.2H857L857,474.2H856L856,463.7H855L855,451.7H854L854,443.7H853L853,431.7H852L852,420.7H851L851,409.9H850L850,396.2H849L849,387.4H848L848,376.2H847L847,362.4H846L846,355.7H845L845,342.2H844L844,333.4H843L843,325.4H842L842,317.7H841L841,303.4H840L840,297.4H839L839,289.9H838L838,283.7H837L837,274.7H836L836,267.2H835L835,262.9H834L834,257.4H833L833,253.7H832L832,248.2H831L831,244.7H830L830,242.4H829L829,239.4H828L828,234.2H827L827,234.4H826L826,230.7H825L825,235.4H824L824,235.2H823L823,234.7H822L822,234.9H821L821,241.7H820L820,243.4H819L819,247.9H818L818,247.7H817L817,254.2H816L816,260.4H815L815,265.9H814L814,271.4H813L813,278.9H812L812,284.9H811L811,294.4H810L810,301.7H809L809,308.9H808L808,321.7H807L807,326.9H806L806,336.7H805L805,343.7H804L804,352.9H803L803,367.2H802L802,373.7H801L801,386.2H800L800,396.2H799L799,404.2H798L798,415.7H797L797,427.4H796L796,433.2H795L795,449.2H794L794,457.4H793L793,469.7H792L792,479.4H791L791,489.7H790L790,495.2H789L789,508.4H788L788,515.5H787L787,526.0H786L786,535.5H785L785,539.5H784L784,547.7H783L783,557.5H782L782,564.2H781L781,567.2H780L780,579.0H779L779,584.5H778L778,589.0H777L777,595.7H776L776,598.0H775L775,604.5H774L774,605.0H773L773,611.2H772L772,610.5H771L771,616.7H770L770,614.0H769L769,616.0H768L768,617.5H767L767,617.0H766L766,613.5H765L765,617.0H764L764,613.5H763L763,610.7H762L762,610.5H761L761,606.0H760L760,602.5H759L759,598.0H758L758,592.7H757L757,588.7H756L756,581.7H755L755,579.5H754L754,571.2H753L753,565.0H752L752,557.2H751L751,552.2H750L750,541.2H749L749,537.5H748L748,526.5H747L747,517.5H746L746,509.7H745L745,497.2H744L744,491.4H743L743,481.9H742L742,470.9H741L741,460.4H740L740,451.4H739L739,439.9H738L738,433.2H737L737,424.7H736L736,413.4H735L735,404.4H734L734,392.2H733L733,383.9H732L732,375.2H731L731,364.9H730L730,356.2H729L729,347.7H728L728,339.2H727L727,330.2H726L726,324.2H725L725,314.4H724L724,309.2H723L723,296.7H722L722,290.4H721L721,285.4H720L720,277.9H719L719,270.2H718L718,265.4H717L717,262.2H716L716,256.9H715L715,251.2H714L714,249.7H713L713,244.9H712L712,239.7H711L711,240.2H710L710,236.4H709L709,233.9H708L708,232.2H707L707,229.2H706L706,232.9H705L705,230.7H704L704,232.9H703L703,236.2H702L702,233.9H701L701,238.4H700L700,240.9H699L699,243.4H698L698,244.4H697L697,252.7H696L696,251.2H695L695,256.9H694L694,261.2H693L693,267.9H692L692,271.4H691L691,279.9H690L690,287.2H689L689,291.7H688L688,296.9H687L687,306.7H686L686,315.2H685L685,320.7H684L684,327.9H683L683,338.2H682L682,345.2H681L681,355.9H680L680,363.4H679L679,372.2H678L678,378.4H677L677,389.9H676L676,397.4H675L675,405.4H674L674,416.9H673L673,424.9H672L672,433.7H671L671,443.7H670L670,452.2H669L669,463.4H668L668,469.9H667L667,477.2H666L666,488.9H665L665,493.2H664L664,501.7H663L663,512.2H662L662,520.5H661L661,530.5H660L660,533.2H659L659,542.0H658L658,551.0H657L657,554.2H656L656,561.2H655L655,569.7H654L654,576.7H653L653,580.7H652L652,584.2H651L651,591.5H650L650,593.5H649L649,600.7H648L648,603.0H647L647,604.2H646L646,610.2H645L645,611.0H644L644,612.5H643L643,616.2H642L642,616.7H641L641,616.7H640L640,618.5H639L639,618.7H638L638,621.2H637L637,621.7H636L636,617.5H635L635,618.2H634L634,611.7H633L633,612.2H632L632,614.2H631L631,611.0H630L630,607.0H629L629,606.0H628L628,596.5H627L627,595.7H626L626,592.2H625L625,586.7H624L624,581.5H623L623,580.5H622L622,572.7H621L621,566.2H620L620,560.2H619L619,555.5H618L618,549.0H617L617,542.0H616L616,534.5H615L615,527.0H614L614,518.2H613L613,512.2H612L612,510.4H611L611,495.7H610L610,488.4H609L609,483.4H608L608,474.9H607L607,463.7H606L606,458.4H605L605,450.4H604L604,441.4H603L603,431.9H602L602,426.7H601L601,419.2H600L600,409.4H599L599,398.7H598L598,392.2H597L597,381.9H596L596,376.4H595L595,366.2H594L594,361.2H593L593,351.2H592L592,348.2H591L591,334.4H590L590,330.7H589L589,320.2H588L588,316.4H587L587,309.4H586L586,303.7H585L585,297.7H584L584,290.9H583L583,284.2H582L582,278.2H581L581,276.9H580L580,269.2H579L579,266.2H578L578,260.4H577L577,256.4H576L576,252.2H575L575,246.9H574L574,244.7H573L573,241.9H572L572,241.2H571L571,236.7H570L570,233.7H569L569,233.2H568L568,233.7H567L567,230.2H566L566,228.7H565L565,229.4H564L564,227.7H563L563,228.4H562L562,230.4H561L561,230.9H560L560,229.9H559L559,231.7H558L558,230.9H557L557,235.2H556L556,237.2H555L555,240.4H554L554,239.4H553L553,241.9H552L552,247.2H551L551,252.4H550L550,255.9H549L549,261.2H548L548,264.7H547L547,269.7H546L546,274.4H545L545,278.9H544L544,282.9H543L543,289.4H542L542,295.4H541L541,300.7H540L540,308.7H539L539,313.7H538L538,317.2H537L537,327.2H536L536,332.7H535L535,339.2H534L534,344.7H533L533,351.9H532L532,360.7H531L531,366.7H530L530,372.4H529L529,378.9H528L528,388.4H527L527,393.9H526L526,403.7H525L525,405.9H524L524,416.4H523L523,422.9H522L522,432.4H521L521,435.9H520L520,444.9H519L519,451.7H518L518,459.7H517L517,464.2H516L516,471.9H515L515,482.4H514L514,488.7H513L513,492.9H512L512,503.2H511L511,506.4H510L510,518.2H509L509,522.2H508L508,526.7H507L507,533.0H506L506,539.7H505L505,545.2H504L504,552.5H503L503,557.0H502L502,563.7H501L501,568.0H500L500,569.7H499L499,575.5H498L498,579.5H497L497,586.2H496L496,589.7H495L495,596.0H494L494,594.7H493L493,599.2H492L492,604.2H491L491,607.5H490L490,608.0H489L489,610.0H488L488,610.5H487L487,615.0H486L486,616.2H485L485,618.2H484L484,618.5H483L483,622.5H482L482,623.0H481L481,624.2H480L480,622.5H479L479,624.0H478L478,624.7H477L477,623.5H476L476,625.2H475L475,622.0H474L474,623.5H473L473,621.5H472L472,620.2H471L471,617.5H470L470,616.0H469L469,614.5H468L468,611.2H467L467,609.0H466L466,605.2H465L465,603.2H464L464,603.0H463L463,597.7H462L462,592.2H461L461,591.0H460L460,587.0H459L459,582.5H458L458,579.5H457L457,575.5H456L456,567.2H455L455,566.5H454L454,563.2H453L453,556.5H452L452,548.7H451L451,544.5H450L450,540.7H449L449,536.7H448L448,530.2H447L447,524.2H446L446,518.0H445L445,513.5H444L444,506.7H443L443,503.4H442L442,495.7H441L441,489.7H440L440,485.2H439L439,475.7H438L438,473.2H437L437,466.2H436L436,459.4H435L435,452.2H434L434,446.4H433L433,441.7H432L432,432.7H431L431,429.9H430L430,422.9H429L429,415.9H428L428,409.4H427L427,404.4H426L426,392.9H425L425,392.7H424L424,382.2H423L423,378.9H422L422,373.7H421L421,365.2H420L420,361.7H419L419,356.7H418L418,347.7H417L417,341.4H416L416,341.7H415L415,333.2H414L414,328.7H413L413,321.4H412L412,314.9H411L411,313.2H410L410,309.9H409L409,303.2H408L408,298.7H407L407,294.2H406L406,289.2H405L405,285.2H404L404,282.2H403L403,273.4H402L402,273.2H401L401,268.2H400L400,264.2H399L399,261.9H398L398,253.2H397L397,254.7H396L396,252.4H395L395,249.2H394L394,245.7H393L393,243.4H392L392,241.4H391L391,240.2H390L390,235.9H389L389,233.4H388L388,231.4H387L387,230.9H386L386,231.2H385L385,229.2H384L384,227.9H383L383,225.7H382L382,224.2H381L381,225.2H380L380,223.4H379L379,223.9H378L378,223.4H377L377,220.2H376L376,222.4H375L375,225.7H374L374,223.7H373L373,224.9H372L372,226.4H371L371,224.9H370L370,228.2H369L369,229.9H368L368,230.4H367L367,231.4H366L366,233.9H365L365,237.7H364L364,236.2H363L363,241.4H362L362,242.4H361L361,243.9H360L360,245.7H359L359,248.7H358L358,252.4H357L357,253.9H356L356,256.9H355L355,258.2H354L354,263.9H353L353,266.2H352L352,272.4H351L351,273.4H350L350,277.9H349L349,281.2H348L348,283.4H347L347,288.4H346L346,292.4H345L345,294.9H344L344,299.7H343L343,304.4H342L342,310.9H341L341,311.7H340L340,316.7H339L339,320.9H338L338,326.9H337L337,330.7H336L336,333.2H335L335,339.2H334L334,343.2H333L333,352.7H332L332,354.9H331L331,359.9H330L330,364.2H329L329,366.4H328L328,372.2H327L327,378.4H326L326,384.4H325L325,385.9H324L324,392.7H323L323,397.7H322L322,404.4H321L321,407.4H320L320,412.4H319L319,418.7H318L318,420.4H317L317,426.7H316L316,431.4H315L315,438.9H314L314,440.2H313L313,447.7H312L312,452.4H311L311,457.2H310L310,461.2H309L309,467.2H308L308,470.2H307L307,473.9H306L306,481.9H305L305,484.9H304L304,490.7H303L303,494.7H302L302,497.9H301L301,503.7H300L300,508.4H299L299,511.2H298L298,516.0H297L297,513.5H296L296,524.7H295L295,529.7H294L294,533.7H293L293,536.7H292L292,539.5H291L291,545.2H290L290,544.5H289L289,549.5H288L288,556.2H287L287,557.0H286L286,561.0H285L285,566.5H284L284,566.7H283L283,571.2H282L282,575.2H281L281,578.2H280L280,579.2H279L279,584.7H278L278,582.5H277L277,593.2H276L276,591.5H275L275,595.7H274L274,597.5H273L273,598.5H272L272,602.2H271L271,605.0H270L270,608.5H269L269,609.2H268L268,610.2H267L267,612.2H266L266,613.7H265L265,617.0H264L264,616.2H263L263,618.0H262L262,620.0H261L261,619.5H260L260,621.2H259L259,623.7H258L258,622.5H257L257,628.0H256L256,626.5H255L255,630.5H254L254,629.0H253L253,631.7H252L252,631.5H251L251,632.7H250L250,631.5H249L249,631.2H248L248,632.2H247L247,632.0H246L246,634.0H245L245,631.2H244L244,630.0H243L243,631.7H242L242,633.0H241L241,632.7H240L240,630.7H239L239,628.0H238L238,630.2H237L237,629.5H236L236,628.2H235L235,629.0H234L234,627.5H233L233,625.5H232L232,627.5H231L231,624.2H230L230,623.2H229L229,622.0H228L228,620.7H227L227,619.2H226L226,617.7H225L225,616.0H224L224,612.0H223L223,613.7H222L222,616.0H221L221,608.5H220L220,611.5H219L219,607.2H218L218,604.7H217L217,602.2H216L216,602.0H215L215,598.7H214L214,596.7H213L213,595.5H212L212,594.0H211L211,592.5H210L210,587.5H209L209,586.0H208L208,584.2H207L207,584.5H206L206,582.7H205L205,579.7H204L204,576.5H203L203,572.7H202L202,570.0H201L201,568.7H200L200,563.0H199L199,561.5H198L198,561.0H197L197,558.5H196L196,555.0H195L195,553.0H194L194,548.2H193L193,547.0H192L192,545.0H191L191,540.0H190L190,535.7H189L189,535.5H188L188,534.0H187L187,529.0H186L186,527.5H185L185,523.0H184L184,521.2H183L183,519.0H182L182,517.5H181L181,513.0H180L180,508.7H179L179,504.9H178L178,503.9H177L177,497.4H176L176,498.7H175L175,494.4H174L174,492.7H173L173,484.9H172L172,485.4H171L171,480.9H170L170,478.4H169L169,473.9H168L168,472.7H167L167,470.4H166L166,465.2H165L165,462.7H164L164,461.4H163L163,456.9H162L162,454.4H161L161,449.4H160L160,447.2H159L159,448.2H158L158,443.7H157L157,440.4H156L156,433.9H155L155,433.2H154L154,431.4H153L153,426.4H152L152,423.4H151L151,423.9H150L150,419.4H149L149,416.9H148L148,413.7H147L147,409.7H146L146,406.7H145L145,402.4H144L144,401.9H143L143,397.7H142L142,399.2H141L141,394.4H140L140,391.4H139L139,389.4H138L138,385.9H137L137,381.2H136L136,379.7H135L135,376.7H134L134,374.2H133L133,371.9H132L132,371.2H131L131,366.2H130L130,364.9H129L129,358.4H128L128,358.9H127L127,357.2H126L126,355.4H125L125,350.2H124L124,347.4H123L123,347.2H122L122,345.9H121L121,342.4H120L120,339.4H119L119,336.4H118L118,334.9H117L117,336.4H116L116,331.2H115L115,331.2H114L114,326.4H113L113,325.4H112L112,323.2H111L111,319.7H110L110,317.4H109L109,317.4H108L108,314.9H107L107,310.4H106L106,311.2H105L105,309.4H104L104,307.2H103L103,305.9H102L102,299.7H101L101,301.4H100L100,297.9H99L99,297.4H98L98,294.2H97L97,294.9H96L96,293.7H95L95,290.4H94L94,290.4H93L93,284.4H92L92,286.2H91L91,284.7H90L90,280.7H89L89,278.7H88L88,278.7H87L87,279.2H86L86,277.7H85L85,273.7H84L84,275.4H83L83,271.9H82L82,267.7H81L81,271.2H80L80,266.9H79L79,269.2H78L78,263.2H77L77,265.9H76L76,263.2H75L75,260.9H74L74,262.9H73L73,260.7H72L72,259.4H71L71,258.4H70L70,256.2H69L69,255.2H68L68,253.2H67L67,253.2H66L66,254.2H65L65,250.9H64L64,249.7H63L63,247.2H62L62,246.4H61L61,247.2H60L60,244.7H59L59,247.2H58L58,242.4H57L57,244.2H56L56,243.7H55L55,242.4H54L54,241.7H53L53,241.7H52L52,240.7H51L51,239.2H50L50,237.7H49L49,234.9H48L48,236.4H47L47,235.4H46L46,235.7H45L45,237.9H44L44,235.2H43L43,236.7H42L42,234.4H41L41,235.2H40L40,232.2H39L39,232.4H38L38,231.7H37L37,232.4H36L36,231.7H35L35,232.4H34Z" fill="#ff0080"/>
<text x="15.5" y="665.8" font-size="15.2" fill="#00ffff" font-weight="normal" textLength="15.1" lengthAdjust="spacingAndGlyphs">C3</text>
<text x="15.5" y="665.8" font-size="15.2" fill="#ff0080" font-weight="normal" textLength="15.1" lengthAdjust="spacingAndGlyphs">C2</text>
<path d="M18.6,669.4 L31,669.4 L33.2,671.2 L33.2,673 L20.4,673 L20.4,674.2 L18.6,674.2 Z" fill="#ff0080"/>
<path d="M1126,703.6 L1120.8,714.6 L1131.4,714.6 Z" fill="#ff0080"/>
<path d="M1126.8,408 L1132,404.6 L1132,411.4 Z" fill="#ff0080"/>
<text x="15.2" y="734.0" font-size="14.2" fill="#fff" font-weight="bold" textLength="65.9" lengthAdjust="spacingAndGlyphs">Measure</text>
<text x="15.2" y="756.6" font-size="14.2" fill="#fff" font-weight="normal" textLength="37.1" lengthAdjust="spacingAndGlyphs">value</text>
<text x="15.2" y="779.0" font-size="14.2" fill="#fff" font-weight="normal" textLength="42.3" lengthAdjust="spacingAndGlyphs">status</text>
<text x="251.6" y="734.0" font-size="14.2" fill="#fff" font-weight="normal" textLength="79.7" lengthAdjust="spacingAndGlyphs">P1:freq(C2)</text>
<text x="211.8" y="756.6" font-size="14.2" fill="#fff" font-weight="normal" textLength="118.9" lengthAdjust="spacingAndGlyphs">2.448849653 kHz</text>
<path d="M317.4,774.7 L320.2,777.9 L328.5,768.7" fill="none" stroke="#00f400" stroke-width="3.5" stroke-linecap="round" stroke-linejoin="round"/>
<text x="411.2" y="734.0" font-size="14.2" fill="#fff" font-weight="normal" textLength="79.7" lengthAdjust="spacingAndGlyphs">P2:freq(C3)</text>
<text x="372.0" y="756.6" font-size="14.2" fill="#fff" font-weight="normal" textLength="118.3" lengthAdjust="spacingAndGlyphs">2.344391044 kHz</text>
<path d="M477.0,774.7 L479.8,777.9 L488.1,768.7" fill="none" stroke="#00f400" stroke-width="3.5" stroke-linecap="round" stroke-linejoin="round"/>
<text x="568.0" y="734.0" font-size="14.2" fill="#fff" font-weight="normal" textLength="82.9" lengthAdjust="spacingAndGlyphs">P3:pkpk(C2)</text>
<text x="605.6" y="756.6" font-size="14.2" fill="#fff" font-weight="normal" textLength="44.7" lengthAdjust="spacingAndGlyphs">2.80 V</text>
<path d="M637.0,774.7 L639.8,777.9 L648.1,768.7" fill="none" stroke="#00f400" stroke-width="3.5" stroke-linecap="round" stroke-linejoin="round"/>
<text x="727.4" y="734.0" font-size="14.2" fill="#fff" font-weight="normal" textLength="83.9" lengthAdjust="spacingAndGlyphs">P4:pkpk(C3)</text>
<text x="764.6" y="756.6" font-size="14.2" fill="#fff" font-weight="normal" textLength="45.9" lengthAdjust="spacingAndGlyphs">2.81 V</text>
<path d="M797.2,774.7 L800.0,777.9 L808.3,768.7" fill="none" stroke="#00f400" stroke-width="3.5" stroke-linecap="round" stroke-linejoin="round"/>
<text x="923.6" y="734.0" font-size="14.2" fill="#4e4e4e" font-weight="normal" textLength="47.3" lengthAdjust="spacingAndGlyphs">P5:- - -</text>
<text x="1083.0" y="734.0" font-size="14.2" fill="#4e4e4e" font-weight="normal" textLength="47.9" lengthAdjust="spacingAndGlyphs">P6:- - -</text>
<path d="M18.6,787.8H149.0L152.2,791.0V844.8L149.0,848.0H18.6L15.4,844.8V791.0Z" fill="#8a62ae"/>
<path d="M18.6,787.8H148.0L151.2,791.0V843.8L148.0,847.0H18.6L15.4,843.8V791.0Z" fill="#c9aee4"/>
<path d="M19.3,789.1H148.5L151.1,791.7V844.3L148.5,846.9H19.3L16.7,844.3V791.7Z" fill="#c597c8"/>
<rect x="18.6" y="791.4" width="131.4" height="17" rx="3" fill="#ff0080"/>
<text x="19.4" y="803.8" font-size="14.4" fill="#1a0010" font-weight="normal" textLength="18.7" lengthAdjust="spacingAndGlyphs">C2</text>
<rect x="106.2" y="792.8" width="43" height="14.2" rx="3.5" fill="#000"/>
<text x="108.6" y="804.4" font-size="12.4" fill="#ff0080" font-weight="normal" textLength="38.1" lengthAdjust="spacingAndGlyphs">DC1M</text>
<text x="73.9" y="825.5" font-size="14.4" fill="#9c6fa6" font-weight="normal" textLength="76.9" lengthAdjust="spacingAndGlyphs">500 mV/div</text>
<text x="73.0" y="824.6" font-size="14.4" fill="#fff" font-weight="normal" textLength="76.9" lengthAdjust="spacingAndGlyphs">500 mV/div</text>
<text x="62.5" y="843.3" font-size="14.4" fill="#9c6fa6" font-weight="normal" textLength="89.3" lengthAdjust="spacingAndGlyphs">-1.800 V ofst</text>
<text x="61.6" y="842.4" font-size="14.4" fill="#fff" font-weight="normal" textLength="89.3" lengthAdjust="spacingAndGlyphs">-1.800 V ofst</text>
<path d="M159.0,786.8H289.2L292.4,790.0V844.0L289.2,847.2H159.0L155.8,844.0V790.0Z" fill="#3c3468"/>
<path d="M159.0,786.8H288.2L291.4,790.0V843.0L288.2,846.2H159.0L155.8,843.0V790.0Z" fill="#9a8cd0"/>
<path d="M159.7,788.1H288.7L291.3,790.7V843.5L288.7,846.1H159.7L157.1,843.5V790.7Z" fill="#7069a3"/>
<rect x="158.8" y="790.2" width="132" height="16.8" rx="3" fill="#00ffff"/>
<text x="159.6" y="802.4" font-size="14.4" fill="#001a1a" font-weight="normal" textLength="18.5" lengthAdjust="spacingAndGlyphs">C3</text>
<rect x="214.4" y="791.6" width="30.2" height="14" rx="3.5" fill="#000"/>
<rect x="246.8" y="791.6" width="42.6" height="14" rx="3.5" fill="#000"/>
<text x="217.2" y="803.2" font-size="12.4" fill="#00ffff" font-weight="normal" textLength="24.7" lengthAdjust="spacingAndGlyphs">BwL</text>
<text x="249.2" y="803.2" font-size="12.4" fill="#00ffff" font-weight="normal" textLength="37.7" lengthAdjust="spacingAndGlyphs">DC1M</text>
<text x="214.1" y="824.1" font-size="14.4" fill="#4b447e" font-weight="normal" textLength="76.7" lengthAdjust="spacingAndGlyphs">500 mV/div</text>
<text x="213.2" y="823.2" font-size="14.4" fill="#fff" font-weight="normal" textLength="76.7" lengthAdjust="spacingAndGlyphs">500 mV/div</text>
<text x="202.9" y="842.3" font-size="14.4" fill="#4b447e" font-weight="normal" textLength="88.9" lengthAdjust="spacingAndGlyphs">-1.800 V ofst</text>
<text x="202.0" y="841.4" font-size="14.4" fill="#fff" font-weight="normal" textLength="88.9" lengthAdjust="spacingAndGlyphs">-1.800 V ofst</text>
<path d="M836.8,786.8H988.2L991.4,790.0V843.8L988.2,847.0H836.8L833.6,843.8V790.0Z" fill="#3c3468"/>
<path d="M836.8,786.8H987.2L990.4,790.0V842.8L987.2,846.0H836.8L833.6,842.8V790.0Z" fill="#9a8cd0"/>
<path d="M837.5,788.1H987.7L990.3,790.7V843.3L987.7,845.9H837.5L834.9,843.3V790.7Z" fill="#7069a3"/>
<rect x="837" y="789.6" width="152" height="17.2" rx="3" fill="#fff"/>
<path d="M999.2,786.8H1142.8L1146.0,790.0V843.8L1142.8,847.0H999.2L996.0,843.8V790.0Z" fill="#3c3468"/>
<path d="M999.2,786.8H1141.8L1145.0,790.0V842.8L1141.8,846.0H999.2L996.0,842.8V790.0Z" fill="#9a8cd0"/>
<path d="M999.9,788.1H1142.3L1144.9,790.7V843.3L1142.3,845.9H999.9L997.3,843.3V790.7Z" fill="#7069a3"/>
<rect x="999.2" y="789.6" width="150" height="17.2" rx="3" fill="#fff"/>
<text x="838.2" y="802.4" font-size="14.6" fill="#000" font-weight="normal" textLength="64.5" lengthAdjust="spacingAndGlyphs">Timebase</text>
<text x="934.6" y="802.4" font-size="14.6" fill="#000" font-weight="normal" textLength="54.1" lengthAdjust="spacingAndGlyphs">2.50 ms</text>
<text x="918.7" y="824.3" font-size="14.6" fill="#4b447e" font-weight="normal" textLength="70.9" lengthAdjust="spacingAndGlyphs">500 µs/div</text>
<text x="917.8" y="823.4" font-size="14.6" fill="#fff" font-weight="normal" textLength="70.9" lengthAdjust="spacingAndGlyphs">500 µs/div</text>
<text x="838.3" y="842.3" font-size="14.6" fill="#4b447e" font-weight="normal" textLength="55.1" lengthAdjust="spacingAndGlyphs">2.00 MS</text>
<text x="837.4" y="841.4" font-size="14.6" fill="#fff" font-weight="normal" textLength="55.1" lengthAdjust="spacingAndGlyphs">2.00 MS</text>
<text x="925.9" y="842.3" font-size="14.6" fill="#4b447e" font-weight="normal" textLength="63.7" lengthAdjust="spacingAndGlyphs">400 MS/s</text>
<text x="925.0" y="841.4" font-size="14.6" fill="#fff" font-weight="normal" textLength="63.7" lengthAdjust="spacingAndGlyphs">400 MS/s</text>
<text x="1000.6" y="802.4" font-size="14.6" fill="#000" font-weight="normal" textLength="47.3" lengthAdjust="spacingAndGlyphs">Trigger</text>
<rect x="1084.6" y="791.2" width="20.4" height="14.4" rx="3.5" fill="#000"/>
<rect x="1106.8" y="791.2" width="22.8" height="14.4" rx="3.5" fill="#000"/>
<text x="1087.0" y="802.6" font-size="12.6" fill="#fff" font-weight="normal" textLength="16.4" lengthAdjust="spacingAndGlyphs">C2</text>
<text x="1108.8" y="802.6" font-size="12.6" fill="#fff" font-weight="normal" textLength="19.4" lengthAdjust="spacingAndGlyphs">AC</text>
<text x="1001.3" y="824.4" font-size="14.6" fill="#4b447e" font-weight="normal" textLength="32.3" lengthAdjust="spacingAndGlyphs">Auto</text>
<text x="1000.4" y="823.5" font-size="14.6" fill="#fff" font-weight="normal" textLength="32.3" lengthAdjust="spacingAndGlyphs">Auto</text>
<text x="1077.5" y="824.4" font-size="14.6" fill="#4b447e" font-weight="normal" textLength="53.7" lengthAdjust="spacingAndGlyphs">1.685 V</text>
<text x="1076.6" y="823.5" font-size="14.6" fill="#fff" font-weight="normal" textLength="53.7" lengthAdjust="spacingAndGlyphs">1.685 V</text>
<text x="1000.9" y="842.9" font-size="14.6" fill="#4b447e" font-weight="normal" textLength="34.3" lengthAdjust="spacingAndGlyphs">Edge</text>
<text x="1000.0" y="842.0" font-size="14.6" fill="#fff" font-weight="normal" textLength="34.3" lengthAdjust="spacingAndGlyphs">Edge</text>
<text x="1078.1" y="842.9" font-size="14.6" fill="#4b447e" font-weight="normal" textLength="53.3" lengthAdjust="spacingAndGlyphs">Positive</text>
<text x="1077.2" y="842.0" font-size="14.6" fill="#fff" font-weight="normal" textLength="53.3" lengthAdjust="spacingAndGlyphs">Positive</text>
<rect x="17" y="850" width="85" height="21" fill="#050505"/>
<text x="22.5" y="868.4" font-size="23.4" fill="#0000ff" font-weight="bold" textLength="74.8" lengthAdjust="spacingAndGlyphs">LeCroy</text>
<rect x="22.8" y="871" width="61.6" height="2.6" fill="#0000ff"/>
<text x="951.3" y="868.5" font-size="16.1" fill="#fff" font-weight="normal" textLength="166.8" lengthAdjust="spacingAndGlyphs">6/22/2024 1:59:49 AM</text>
</svg></body></html>
